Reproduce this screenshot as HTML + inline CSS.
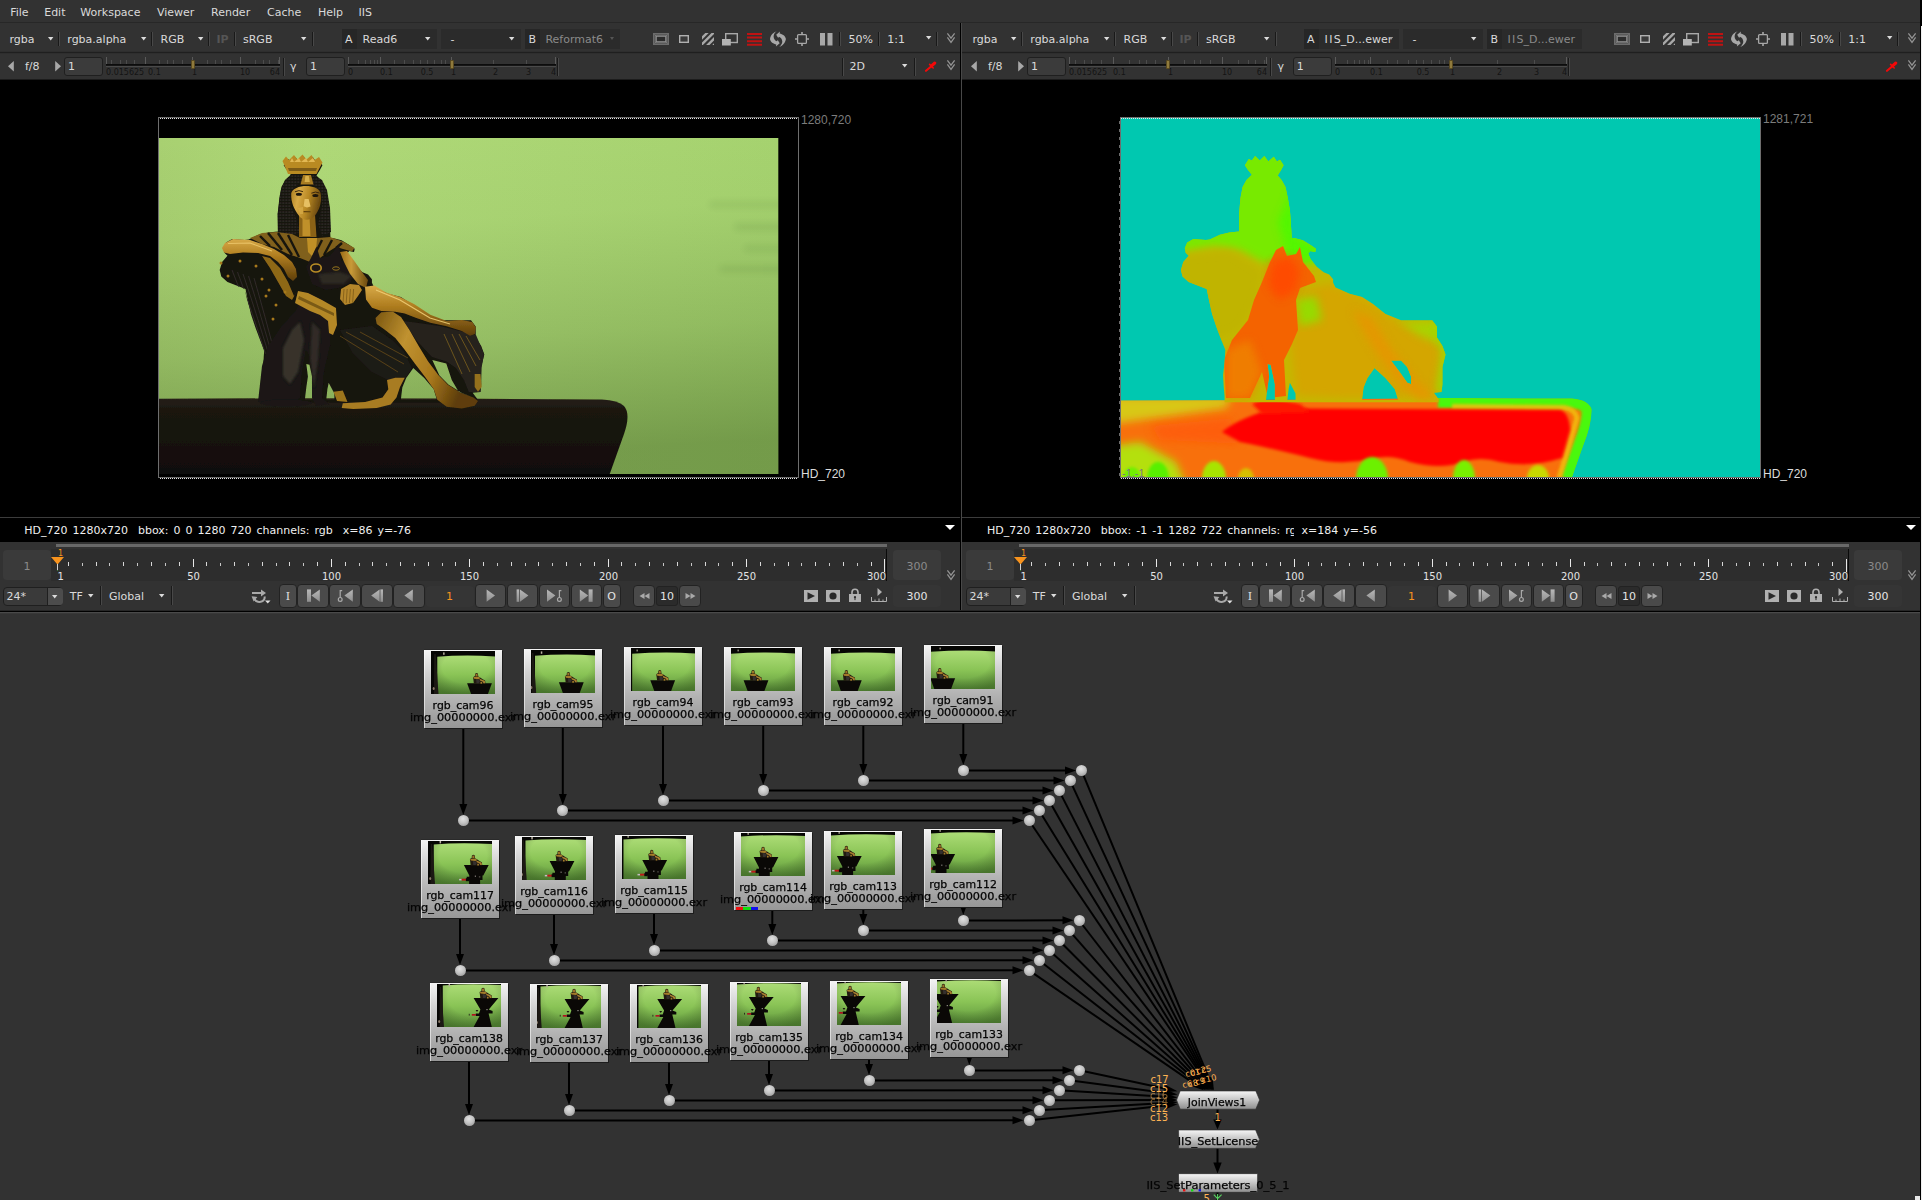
<!DOCTYPE html>
<html lang="en"><head><meta charset="utf-8"><title>Nuke - JoinViews multi-camera depth</title>
<style>
html,body{margin:0;padding:0}
body{width:1922px;height:1200px;overflow:hidden;position:relative;background:#323232;
 font-family:"DejaVu Sans","Liberation Sans",sans-serif;font-size:11px;color:#dadada}
#app{position:absolute;left:0;top:0;width:1922px;height:1200px;overflow:hidden}
#app div,#app span,#app svg{position:absolute;display:block}
#app span{line-height:16px;height:16px;white-space:nowrap}
#app svg{overflow:visible}
#app i{font-style:normal;letter-spacing:1.3px}
#app .nd{background:linear-gradient(#f4f4f4 0%,#d2d2d2 30%,#b4b4b4 62%,#979797 100%);box-shadow:1px 1px 0 #1c1c1c,0 -1px 0 #2a2a2a,inset 1px 0 0 rgba(255,255,255,.55)}
#app .nd svg{left:7px;top:1px;overflow:hidden}
#app .nl{left:-40px;width:158px;text-align:center;color:#050505;font-size:10px;transform:scaleX(1.09);transform-origin:50% 50%;-webkit-text-stroke:0.25px #050505}
#app .n2{transform:scaleX(1.13)}
#app .dot{width:11px;height:11px;border-radius:6px;background:radial-gradient(circle at 45% 35%,#e2e2e2 0%,#c4c4c4 45%,#8a8a8a 100%)}
</style></head><body><div id="app">
<svg width="0" height="0"><defs><linearGradient id="bg" x1="0" y1="0" x2="0" y2="1"><stop offset="0" stop-color="#b8b8b8"/><stop offset="1" stop-color="#8e8e8e"/></linearGradient></defs></svg>

<span style="left:10.2px;top:5px;font-size:11px;color:#dadada;">File</span>
<span style="left:44.2px;top:5px;font-size:11px;color:#dadada;">Edit</span>
<span style="left:80.3px;top:5px;font-size:11px;color:#dadada;">Workspace</span>
<span style="left:157px;top:5px;font-size:11px;color:#dadada;">Viewer</span>
<span style="left:211px;top:5px;font-size:11px;color:#dadada;">Render</span>
<span style="left:267px;top:5px;font-size:11px;color:#dadada;">Cache</span>
<span style="left:318px;top:5px;font-size:11px;color:#dadada;">Help</span>
<span style="left:358.5px;top:5px;font-size:11px;color:#dadada;">IIS</span>
<div style="left:0px;top:22px;width:1920px;height:1px;background:#272727;"></div>
<div style="left:0px;top:51px;width:960px;height:1px;background:#2e2e2e;"></div>
<div style="left:0px;top:52px;width:960px;height:1px;background:#1f1f1f;"></div>
<div style="left:0px;top:53px;width:960px;height:1px;background:#2e2e2e;"></div>
<div style="left:0px;top:79px;width:960px;height:1px;background:#1c1c1c;"></div>
<div style="left:0px;top:80px;width:960px;height:462px;background:#000;"></div>
<div style="left:0px;top:517px;width:960px;height:1px;background:#3c3c3c;"></div>
<div style="left:962px;top:51px;width:958px;height:1px;background:#2e2e2e;"></div>
<div style="left:962px;top:52px;width:958px;height:1px;background:#1f1f1f;"></div>
<div style="left:962px;top:53px;width:958px;height:1px;background:#2e2e2e;"></div>
<div style="left:962px;top:79px;width:958px;height:1px;background:#1c1c1c;"></div>
<div style="left:962px;top:80px;width:958px;height:462px;background:#000;"></div>
<div style="left:962px;top:517px;width:958px;height:1px;background:#3c3c3c;"></div>
<span style="left:9.4px;top:32px;font-size:11px;color:#dadada;">rgba</span>
<svg style="left:47.5px;top:36.5px" width="5.4" height="3.6" viewBox="0 0 5.4 3.6"><path d="M0 0H5.4L2.7 3.6Z" fill="#dcdcdc"/></svg>
<div style="left:58px;top:32px;width:1px;height:14px;background:#191919;"></div>
<div style="left:59px;top:32px;width:1px;height:14px;background:#484848;"></div>
<span style="left:67.3px;top:32px;font-size:11px;color:#dadada;">rgba.alpha</span>
<svg style="left:140.5px;top:36.5px" width="5.4" height="3.6" viewBox="0 0 5.4 3.6"><path d="M0 0H5.4L2.7 3.6Z" fill="#dcdcdc"/></svg>
<div style="left:151px;top:32px;width:1px;height:14px;background:#191919;"></div>
<div style="left:152px;top:32px;width:1px;height:14px;background:#484848;"></div>
<span style="left:160.5px;top:32px;font-size:11px;color:#dadada;">RGB</span>
<svg style="left:197.5px;top:36.5px" width="5.4" height="3.6" viewBox="0 0 5.4 3.6"><path d="M0 0H5.4L2.7 3.6Z" fill="#dcdcdc"/></svg>
<div style="left:208px;top:32px;width:1px;height:14px;background:#191919;"></div>
<div style="left:209px;top:32px;width:1px;height:14px;background:#484848;"></div>
<span style="left:216.5px;top:32px;font-size:11px;color:#555;font-weight:bold">IP</span>
<div style="left:234px;top:32px;width:1px;height:14px;background:#191919;"></div>
<div style="left:235px;top:32px;width:1px;height:14px;background:#484848;"></div>
<span style="left:243px;top:32px;font-size:11px;color:#dadada;">sRGB</span>
<svg style="left:301px;top:36.5px" width="5.4" height="3.6" viewBox="0 0 5.4 3.6"><path d="M0 0H5.4L2.7 3.6Z" fill="#dcdcdc"/></svg>
<div style="left:312px;top:32px;width:1px;height:14px;background:#191919;"></div>
<div style="left:313px;top:32px;width:1px;height:14px;background:#484848;"></div>
<div style="left:342px;top:29px;width:15px;height:20px;background:#262626;"></div>
<div style="left:357px;top:29px;width:80px;height:20px;background:#2b2b2b;"></div>
<span style="left:345px;top:32px;font-size:11px;color:#dadada;">A</span>
<span style="left:362.6px;top:32px;font-size:11px;color:#dadada;">Read6</span>
<svg style="left:424.5px;top:36.5px" width="5.4" height="3.6" viewBox="0 0 5.4 3.6"><path d="M0 0H5.4L2.7 3.6Z" fill="#dcdcdc"/></svg>
<div style="left:441px;top:29px;width:80px;height:20px;background:#2b2b2b;"></div>
<span style="left:450.5px;top:32px;font-size:11px;color:#dadada;">-</span>
<svg style="left:508.5px;top:36.5px" width="5.4" height="3.6" viewBox="0 0 5.4 3.6"><path d="M0 0H5.4L2.7 3.6Z" fill="#dcdcdc"/></svg>
<div style="left:525px;top:29px;width:15px;height:20px;background:#262626;"></div>
<div style="left:540px;top:29px;width:80px;height:20px;background:#2b2b2b;"></div>
<span style="left:528.6px;top:32px;font-size:11px;color:#dadada;">B</span>
<span style="left:545.4px;top:32px;font-size:11px;color:#8a8a8a;">Reformat6</span>
<svg style="left:610px;top:37px" width="4" height="3" viewBox="0 0 4 3"><path d="M0 0H4L2.0 3Z" fill="#555"/></svg>
<svg style="left:653px;top:33px" width="16" height="12" viewBox="0 0 16 12"><rect x="0.5" y="0.5" width="15" height="11" fill="#5a5a5a" stroke="#6c6c6c"/><rect x="3.2" y="3.2" width="9.6" height="5.6" fill="#2c2c2c" stroke="#8e8e8e" stroke-width="1.2"/><path d="M1.5 1.5L3 3M14.5 1.5L13 3M1.5 10.5L3 9M14.5 10.5L13 9" stroke="#8a8a8a" stroke-width="0.6"/></svg>
<svg style="left:679px;top:35px" width="10" height="8" viewBox="0 0 10 8"><rect x="0.7" y="0.7" width="8.6" height="6.6" fill="#3a3a3a" stroke="#b0b0b0" stroke-width="1.4"/></svg>
<svg style="left:702px;top:33px" width="12" height="12" viewBox="0 0 12 12"><clipPath id="st0"><rect width="12" height="12"/></clipPath><g clip-path="url(#st0)" stroke="#a8a8a8" stroke-width="2.4"><path d="M-1 6L6 -1M-1 12.2L12.2 -1M4.8 13L13 4.8M11 13L13 11"/></g></svg>
<svg style="left:722px;top:33px" width="16" height="12.5" viewBox="0 0 16 12.5"><rect x="3.7" y="0.7" width="11.6" height="8.8" fill="none" stroke="#a8a8a8" stroke-width="1.4"/><rect x="0" y="6" width="8.8" height="6.5" fill="#b4b4b4"/></svg>
<svg style="left:747px;top:32.5px" width="15" height="13" viewBox="0 0 15 13"><path d="M0 0H15V2H0ZM0 3.6H15V5.6H0ZM0 7.2H15V9.2H0ZM0 10.8H15V12.8H0Z" fill="#c01212"/></svg>
<svg style="left:770px;top:31px" width="16" height="16" viewBox="0 0 16 16"><path d="M6.6 0.2C4 1 0.6 3.5 0 8C0.3 11 3.5 13 6.3 13.5L5.9 15.4L9.7 12.2L7.7 9L7 10.3C5 9.7 3.7 7.8 3.6 5.4C3.6 3.6 4.8 1.4 6.6 0.2Z" fill="#a8a8a8"/><path d="M6.6 0.2C4 1 0.6 3.5 0 8C0.3 11 3.5 13 6.3 13.5L5.9 15.4L9.7 12.2L7.7 9L7 10.3C5 9.7 3.7 7.8 3.6 5.4C3.6 3.6 4.8 1.4 6.6 0.2Z" fill="#a8a8a8" transform="rotate(180 7.95 8)"/></svg>
<svg style="left:795px;top:32px" width="14" height="14" viewBox="0 0 14 14"><rect x="2.6" y="2.6" width="8.8" height="8.8" rx="1" fill="none" stroke="#a8a8a8" stroke-width="1.3"/><path d="M7 0V3M7 11V14M0 7H3M11 7H14" stroke="#a8a8a8" stroke-width="1.6"/></svg>
<svg style="left:819.5px;top:33px" width="13" height="12.5" viewBox="0 0 13 12.5"><rect x="0" y="0" width="5" height="12.5" fill="#a8a8a8"/><rect x="7.5" y="0" width="5" height="12.5" fill="#a8a8a8"/></svg>
<div style="left:839px;top:32px;width:1px;height:14px;background:#191919;"></div>
<div style="left:840px;top:32px;width:1px;height:14px;background:#484848;"></div>
<span style="left:848.6px;top:32px;font-size:11px;color:#dadada;">50%</span>
<div style="left:878px;top:32px;width:1px;height:14px;background:#191919;"></div>
<div style="left:879px;top:32px;width:1px;height:14px;background:#484848;"></div>
<span style="left:887.3px;top:32px;font-size:11px;color:#dadada;">1:1</span>
<svg style="left:925.6px;top:35.6px" width="5.4" height="3.6" viewBox="0 0 5.4 3.6"><path d="M0 0H5.4L2.7 3.6Z" fill="#dcdcdc"/></svg>
<div style="left:936px;top:32px;width:1px;height:14px;background:#191919;"></div>
<div style="left:937px;top:32px;width:1px;height:14px;background:#484848;"></div>
<svg style="left:947px;top:33px" width="8" height="11" viewBox="0 0 8 11"><path d="M0.4 0.3L4 5.2L7.6 0.3M0.4 4.4L4 9.4L7.6 4.4" fill="none" stroke="#949494" stroke-width="1.25"/></svg>
<svg style="left:7.7px;top:61px" width="6" height="10.4" viewBox="0 0 6 10.4"><path d="M5.8 0V10.4L0 5.2Z" fill="#a8a8a8"/></svg>
<span style="left:25px;top:59px;font-size:11px;color:#dadada;">f/8</span>
<svg style="left:54.6px;top:61px" width="6" height="10.4" viewBox="0 0 6 10.4"><path d="M0.2 0V10.4L6 5.2Z" fill="#a8a8a8"/></svg>
<div style="left:64px;top:57px;width:39px;height:18.5px;background:#3b3b3b;border:1px solid #1f1f1f;box-sizing:border-box;border-radius:3px"></div>
<span style="left:68px;top:59px;font-size:11px;color:#dadada;">1</span>
<div style="left:106px;top:57px;width:1px;height:7px;background:#5a5a5a;"></div>
<div style="left:111px;top:60px;width:1px;height:4px;background:#4c4c4c;"></div>
<div style="left:120px;top:60px;width:1px;height:4px;background:#4c4c4c;"></div>
<div style="left:126px;top:60px;width:1px;height:4px;background:#4c4c4c;"></div>
<div style="left:134px;top:60px;width:1px;height:4px;background:#4c4c4c;"></div>
<div style="left:145px;top:57px;width:1px;height:7px;background:#5a5a5a;"></div>
<div style="left:159px;top:60px;width:1px;height:4px;background:#4c4c4c;"></div>
<div style="left:167px;top:60px;width:1px;height:4px;background:#4c4c4c;"></div>
<div style="left:173px;top:60px;width:1px;height:4px;background:#4c4c4c;"></div>
<div style="left:182px;top:60px;width:1px;height:4px;background:#4c4c4c;"></div>
<div style="left:192px;top:57px;width:1px;height:7px;background:#5a5a5a;"></div>
<div style="left:207px;top:60px;width:1px;height:4px;background:#4c4c4c;"></div>
<div style="left:215px;top:60px;width:1px;height:4px;background:#4c4c4c;"></div>
<div style="left:221px;top:60px;width:1px;height:4px;background:#4c4c4c;"></div>
<div style="left:230px;top:60px;width:1px;height:4px;background:#4c4c4c;"></div>
<div style="left:240px;top:57px;width:1px;height:7px;background:#5a5a5a;"></div>
<div style="left:255px;top:60px;width:1px;height:4px;background:#4c4c4c;"></div>
<div style="left:263px;top:60px;width:1px;height:4px;background:#4c4c4c;"></div>
<div style="left:269px;top:60px;width:1px;height:4px;background:#4c4c4c;"></div>
<div style="left:278px;top:60px;width:1px;height:4px;background:#4c4c4c;"></div>
<div style="left:279px;top:57px;width:1px;height:7px;background:#5a5a5a;"></div>
<div style="left:106px;top:64px;width:174px;height:1px;background:#0c0c0c;"></div>
<div style="left:106px;top:65px;width:174px;height:1px;background:#161616;"></div>
<div style="left:106px;top:66px;width:174px;height:1px;background:#4a4a4a;"></div>
<span style="left:106px;top:65px;font-size:8px;color:#141414;">0.015625</span>
<span style="left:148px;top:65px;font-size:8px;color:#141414;">0.1</span>
<span style="left:192px;top:65px;font-size:8px;color:#141414;">1</span>
<span style="left:240px;top:65px;font-size:8px;color:#141414;">10</span>
<span style="left:219px;top:65px;width:61px;text-align:right;font-size:8px;color:#141414">64</span>
<div style="left:191px;top:60px;width:4px;height:9px;background:#8f7a3c;border:1px solid #5a4a20;box-sizing:border-box;border-radius:1px"></div>
<div style="left:283px;top:58px;width:1px;height:18px;background:#191919;"></div>
<div style="left:284px;top:58px;width:1px;height:18px;background:#484848;"></div>
<span style="left:290px;top:59px;font-size:11px;color:#dadada;">γ</span>
<div style="left:306px;top:57px;width:39px;height:18.5px;background:#3b3b3b;border:1px solid #1f1f1f;box-sizing:border-box;border-radius:3px"></div>
<span style="left:310px;top:59px;font-size:11px;color:#dadada;">1</span>
<div style="left:348px;top:57px;width:1px;height:7px;background:#5a5a5a;"></div>
<div style="left:358px;top:60px;width:1px;height:4px;background:#4c4c4c;"></div>
<div style="left:365px;top:60px;width:1px;height:4px;background:#4c4c4c;"></div>
<div style="left:370px;top:60px;width:1px;height:4px;background:#4c4c4c;"></div>
<div style="left:374px;top:60px;width:1px;height:4px;background:#4c4c4c;"></div>
<div style="left:377px;top:60px;width:1px;height:4px;background:#4c4c4c;"></div>
<div style="left:380px;top:57px;width:1px;height:7px;background:#5a5a5a;"></div>
<div style="left:394px;top:60px;width:1px;height:4px;background:#4c4c4c;"></div>
<div style="left:404px;top:60px;width:1px;height:4px;background:#4c4c4c;"></div>
<div style="left:413px;top:60px;width:1px;height:4px;background:#4c4c4c;"></div>
<div style="left:420px;top:60px;width:1px;height:4px;background:#4c4c4c;"></div>
<div style="left:427px;top:60px;width:1px;height:4px;background:#4c4c4c;"></div>
<div style="left:434px;top:60px;width:1px;height:4px;background:#4c4c4c;"></div>
<div style="left:441px;top:60px;width:1px;height:4px;background:#4c4c4c;"></div>
<div style="left:445px;top:60px;width:1px;height:4px;background:#4c4c4c;"></div>
<div style="left:451px;top:57px;width:1px;height:7px;background:#5a5a5a;"></div>
<div style="left:493px;top:60px;width:1px;height:4px;background:#4c4c4c;"></div>
<div style="left:526px;top:60px;width:1px;height:4px;background:#4c4c4c;"></div>
<div style="left:555px;top:57px;width:1px;height:7px;background:#5a5a5a;"></div>
<div style="left:348px;top:64px;width:208px;height:1px;background:#0c0c0c;"></div>
<div style="left:348px;top:65px;width:208px;height:1px;background:#161616;"></div>
<div style="left:348px;top:66px;width:208px;height:1px;background:#4a4a4a;"></div>
<span style="left:348px;top:65px;font-size:8px;color:#141414;">0</span>
<span style="left:380px;top:65px;font-size:8px;color:#141414;">0.1</span>
<span style="left:397px;top:65px;width:60px;text-align:center;font-size:8px;color:#141414">0.5</span>
<span style="left:451px;top:65px;font-size:8px;color:#141414;">1</span>
<span style="left:493px;top:65px;font-size:8px;color:#141414;">2</span>
<span style="left:526px;top:65px;font-size:8px;color:#141414;">3</span>
<span style="left:495px;top:65px;width:61px;text-align:right;font-size:8px;color:#141414">4</span>
<div style="left:450px;top:60px;width:4px;height:9px;background:#8f7a3c;border:1px solid #5a4a20;box-sizing:border-box;border-radius:1px"></div>
<div style="left:556.5px;top:58px;width:1px;height:18px;background:#191919;"></div>
<div style="left:557.5px;top:58px;width:1px;height:18px;background:#484848;"></div>
<div style="left:842px;top:58px;width:1px;height:18px;background:#191919;"></div>
<div style="left:843px;top:58px;width:1px;height:18px;background:#484848;"></div>
<span style="left:849.5px;top:59px;font-size:11px;color:#dadada;">2D</span>
<svg style="left:901.5px;top:63.5px" width="5.4" height="3.6" viewBox="0 0 5.4 3.6"><path d="M0 0H5.4L2.7 3.6Z" fill="#dcdcdc"/></svg>
<div style="left:914px;top:58px;width:1px;height:18px;background:#191919;"></div>
<div style="left:915px;top:58px;width:1px;height:18px;background:#484848;"></div>
<svg style="left:925.4px;top:60.5px" width="12" height="11" viewBox="0 0 12 11"><path d="M1 9.8L6.4 5.2" stroke="#f40808" stroke-width="2.1" stroke-linecap="round"/><path d="M4.6 3.4L8.2 7" stroke="#f40808" stroke-width="1.6" stroke-linecap="round"/><path d="M6.6 4.8L9.8 2" stroke="#f40808" stroke-width="3" stroke-linecap="round"/></svg>
<svg style="left:947px;top:60px" width="8" height="11" viewBox="0 0 8 11"><path d="M0.4 0.3L4 5.2L7.6 0.3M0.4 4.4L4 9.4L7.6 4.4" fill="none" stroke="#949494" stroke-width="1.25"/></svg>
<span style="left:972.4px;top:32px;font-size:11px;color:#dadada;">rgba</span>
<svg style="left:1010.5px;top:36.5px" width="5.4" height="3.6" viewBox="0 0 5.4 3.6"><path d="M0 0H5.4L2.7 3.6Z" fill="#dcdcdc"/></svg>
<div style="left:1021px;top:32px;width:1px;height:14px;background:#191919;"></div>
<div style="left:1022px;top:32px;width:1px;height:14px;background:#484848;"></div>
<span style="left:1030.3px;top:32px;font-size:11px;color:#dadada;">rgba.alpha</span>
<svg style="left:1103.5px;top:36.5px" width="5.4" height="3.6" viewBox="0 0 5.4 3.6"><path d="M0 0H5.4L2.7 3.6Z" fill="#dcdcdc"/></svg>
<div style="left:1114px;top:32px;width:1px;height:14px;background:#191919;"></div>
<div style="left:1115px;top:32px;width:1px;height:14px;background:#484848;"></div>
<span style="left:1123.5px;top:32px;font-size:11px;color:#dadada;">RGB</span>
<svg style="left:1160.5px;top:36.5px" width="5.4" height="3.6" viewBox="0 0 5.4 3.6"><path d="M0 0H5.4L2.7 3.6Z" fill="#dcdcdc"/></svg>
<div style="left:1171px;top:32px;width:1px;height:14px;background:#191919;"></div>
<div style="left:1172px;top:32px;width:1px;height:14px;background:#484848;"></div>
<span style="left:1179.5px;top:32px;font-size:11px;color:#555;font-weight:bold">IP</span>
<div style="left:1197px;top:32px;width:1px;height:14px;background:#191919;"></div>
<div style="left:1198px;top:32px;width:1px;height:14px;background:#484848;"></div>
<span style="left:1206px;top:32px;font-size:11px;color:#dadada;">sRGB</span>
<svg style="left:1264px;top:36.5px" width="5.4" height="3.6" viewBox="0 0 5.4 3.6"><path d="M0 0H5.4L2.7 3.6Z" fill="#dcdcdc"/></svg>
<div style="left:1275px;top:32px;width:1px;height:14px;background:#191919;"></div>
<div style="left:1276px;top:32px;width:1px;height:14px;background:#484848;"></div>
<div style="left:1304px;top:29px;width:15px;height:20px;background:#262626;"></div>
<div style="left:1319px;top:29px;width:80px;height:20px;background:#2b2b2b;"></div>
<span style="left:1307px;top:32px;font-size:11px;color:#dadada;">A</span>
<span style="left:1324.6px;top:32px;font-size:11px;color:#dadada;"><i>II</i>S_D...ewer</span>
<svg style="left:1389px;top:37px" width="4" height="3" viewBox="0 0 4 3"><path d="M0 0H4L2.0 3Z" fill="#9a9a9a"/></svg>
<div style="left:1403px;top:29px;width:80px;height:20px;background:#2b2b2b;"></div>
<span style="left:1412.5px;top:32px;font-size:11px;color:#dadada;">-</span>
<svg style="left:1470.5px;top:36.5px" width="5.4" height="3.6" viewBox="0 0 5.4 3.6"><path d="M0 0H5.4L2.7 3.6Z" fill="#dcdcdc"/></svg>
<div style="left:1487px;top:29px;width:15px;height:20px;background:#262626;"></div>
<div style="left:1502px;top:29px;width:80px;height:20px;background:#2b2b2b;"></div>
<span style="left:1490.6px;top:32px;font-size:11px;color:#dadada;">B</span>
<span style="left:1507.4px;top:32px;font-size:11px;color:#8a8a8a;"><i>II</i>S_D...ewer</span>
<svg style="left:1614px;top:33px" width="16" height="12" viewBox="0 0 16 12"><rect x="0.5" y="0.5" width="15" height="11" fill="#5a5a5a" stroke="#6c6c6c"/><rect x="3.2" y="3.2" width="9.6" height="5.6" fill="#2c2c2c" stroke="#8e8e8e" stroke-width="1.2"/><path d="M1.5 1.5L3 3M14.5 1.5L13 3M1.5 10.5L3 9M14.5 10.5L13 9" stroke="#8a8a8a" stroke-width="0.6"/></svg>
<svg style="left:1640px;top:35px" width="10" height="8" viewBox="0 0 10 8"><rect x="0.7" y="0.7" width="8.6" height="6.6" fill="#3a3a3a" stroke="#b0b0b0" stroke-width="1.4"/></svg>
<svg style="left:1663px;top:33px" width="12" height="12" viewBox="0 0 12 12"><clipPath id="st961"><rect width="12" height="12"/></clipPath><g clip-path="url(#st961)" stroke="#a8a8a8" stroke-width="2.4"><path d="M-1 6L6 -1M-1 12.2L12.2 -1M4.8 13L13 4.8M11 13L13 11"/></g></svg>
<svg style="left:1683px;top:33px" width="16" height="12.5" viewBox="0 0 16 12.5"><rect x="3.7" y="0.7" width="11.6" height="8.8" fill="none" stroke="#a8a8a8" stroke-width="1.4"/><rect x="0" y="6" width="8.8" height="6.5" fill="#b4b4b4"/></svg>
<svg style="left:1708px;top:32.5px" width="15" height="13" viewBox="0 0 15 13"><path d="M0 0H15V2H0ZM0 3.6H15V5.6H0ZM0 7.2H15V9.2H0ZM0 10.8H15V12.8H0Z" fill="#c01212"/></svg>
<svg style="left:1731px;top:31px" width="16" height="16" viewBox="0 0 16 16"><path d="M6.6 0.2C4 1 0.6 3.5 0 8C0.3 11 3.5 13 6.3 13.5L5.9 15.4L9.7 12.2L7.7 9L7 10.3C5 9.7 3.7 7.8 3.6 5.4C3.6 3.6 4.8 1.4 6.6 0.2Z" fill="#a8a8a8"/><path d="M6.6 0.2C4 1 0.6 3.5 0 8C0.3 11 3.5 13 6.3 13.5L5.9 15.4L9.7 12.2L7.7 9L7 10.3C5 9.7 3.7 7.8 3.6 5.4C3.6 3.6 4.8 1.4 6.6 0.2Z" fill="#a8a8a8" transform="rotate(180 7.95 8)"/></svg>
<svg style="left:1756px;top:32px" width="14" height="14" viewBox="0 0 14 14"><rect x="2.6" y="2.6" width="8.8" height="8.8" rx="1" fill="none" stroke="#a8a8a8" stroke-width="1.3"/><path d="M7 0V3M7 11V14M0 7H3M11 7H14" stroke="#a8a8a8" stroke-width="1.6"/></svg>
<svg style="left:1780.5px;top:33px" width="13" height="12.5" viewBox="0 0 13 12.5"><rect x="0" y="0" width="5" height="12.5" fill="#a8a8a8"/><rect x="7.5" y="0" width="5" height="12.5" fill="#a8a8a8"/></svg>
<div style="left:1800px;top:32px;width:1px;height:14px;background:#191919;"></div>
<div style="left:1801px;top:32px;width:1px;height:14px;background:#484848;"></div>
<span style="left:1809.6px;top:32px;font-size:11px;color:#dadada;">50%</span>
<div style="left:1839px;top:32px;width:1px;height:14px;background:#191919;"></div>
<div style="left:1840px;top:32px;width:1px;height:14px;background:#484848;"></div>
<span style="left:1848.3px;top:32px;font-size:11px;color:#dadada;">1:1</span>
<svg style="left:1886.6px;top:35.6px" width="5.4" height="3.6" viewBox="0 0 5.4 3.6"><path d="M0 0H5.4L2.7 3.6Z" fill="#dcdcdc"/></svg>
<div style="left:1897px;top:32px;width:1px;height:14px;background:#191919;"></div>
<div style="left:1898px;top:32px;width:1px;height:14px;background:#484848;"></div>
<svg style="left:1908px;top:33px" width="8" height="11" viewBox="0 0 8 11"><path d="M0.4 0.3L4 5.2L7.6 0.3M0.4 4.4L4 9.4L7.6 4.4" fill="none" stroke="#949494" stroke-width="1.25"/></svg>
<svg style="left:970.7px;top:61px" width="6" height="10.4" viewBox="0 0 6 10.4"><path d="M5.8 0V10.4L0 5.2Z" fill="#a8a8a8"/></svg>
<span style="left:988px;top:59px;font-size:11px;color:#dadada;">f/8</span>
<svg style="left:1017.6px;top:61px" width="6" height="10.4" viewBox="0 0 6 10.4"><path d="M0.2 0V10.4L6 5.2Z" fill="#a8a8a8"/></svg>
<div style="left:1027px;top:57px;width:39px;height:18.5px;background:#3b3b3b;border:1px solid #1f1f1f;box-sizing:border-box;border-radius:3px"></div>
<span style="left:1031px;top:59px;font-size:11px;color:#dadada;">1</span>
<div style="left:1069px;top:57px;width:1px;height:7px;background:#5a5a5a;"></div>
<div style="left:1075px;top:60px;width:1px;height:4px;background:#4c4c4c;"></div>
<div style="left:1084px;top:60px;width:1px;height:4px;background:#4c4c4c;"></div>
<div style="left:1091px;top:60px;width:1px;height:4px;background:#4c4c4c;"></div>
<div style="left:1101px;top:60px;width:1px;height:4px;background:#4c4c4c;"></div>
<div style="left:1113px;top:57px;width:1px;height:7px;background:#5a5a5a;"></div>
<div style="left:1129px;top:60px;width:1px;height:4px;background:#4c4c4c;"></div>
<div style="left:1139px;top:60px;width:1px;height:4px;background:#4c4c4c;"></div>
<div style="left:1146px;top:60px;width:1px;height:4px;background:#4c4c4c;"></div>
<div style="left:1155px;top:60px;width:1px;height:4px;background:#4c4c4c;"></div>
<div style="left:1168px;top:57px;width:1px;height:7px;background:#5a5a5a;"></div>
<div style="left:1184px;top:60px;width:1px;height:4px;background:#4c4c4c;"></div>
<div style="left:1194px;top:60px;width:1px;height:4px;background:#4c4c4c;"></div>
<div style="left:1200px;top:60px;width:1px;height:4px;background:#4c4c4c;"></div>
<div style="left:1210px;top:60px;width:1px;height:4px;background:#4c4c4c;"></div>
<div style="left:1222px;top:57px;width:1px;height:7px;background:#5a5a5a;"></div>
<div style="left:1238px;top:60px;width:1px;height:4px;background:#4c4c4c;"></div>
<div style="left:1248px;top:60px;width:1px;height:4px;background:#4c4c4c;"></div>
<div style="left:1255px;top:60px;width:1px;height:4px;background:#4c4c4c;"></div>
<div style="left:1264px;top:60px;width:1px;height:4px;background:#4c4c4c;"></div>
<div style="left:1266px;top:57px;width:1px;height:7px;background:#5a5a5a;"></div>
<div style="left:1069px;top:64px;width:198px;height:1px;background:#0c0c0c;"></div>
<div style="left:1069px;top:65px;width:198px;height:1px;background:#161616;"></div>
<div style="left:1069px;top:66px;width:198px;height:1px;background:#4a4a4a;"></div>
<span style="left:1069px;top:65px;font-size:8px;color:#141414;">0.015625</span>
<span style="left:1113px;top:65px;font-size:8px;color:#141414;">0.1</span>
<span style="left:1168px;top:65px;font-size:8px;color:#141414;">1</span>
<span style="left:1222px;top:65px;font-size:8px;color:#141414;">10</span>
<span style="left:1206px;top:65px;width:61px;text-align:right;font-size:8px;color:#141414">64</span>
<div style="left:1166px;top:60px;width:4px;height:9px;background:#8f7a3c;border:1px solid #5a4a20;box-sizing:border-box;border-radius:1px"></div>
<div style="left:1270px;top:58px;width:1px;height:18px;background:#191919;"></div>
<div style="left:1271px;top:58px;width:1px;height:18px;background:#484848;"></div>
<span style="left:1277.4px;top:59px;font-size:11px;color:#dadada;">γ</span>
<div style="left:1292.7px;top:57px;width:39px;height:18.5px;background:#3b3b3b;border:1px solid #1f1f1f;box-sizing:border-box;border-radius:3px"></div>
<span style="left:1296.7px;top:59px;font-size:11px;color:#dadada;">1</span>
<div style="left:1335px;top:57px;width:1px;height:7px;background:#5a5a5a;"></div>
<div style="left:1347px;top:60px;width:1px;height:4px;background:#4c4c4c;"></div>
<div style="left:1354px;top:60px;width:1px;height:4px;background:#4c4c4c;"></div>
<div style="left:1359px;top:60px;width:1px;height:4px;background:#4c4c4c;"></div>
<div style="left:1364px;top:60px;width:1px;height:4px;background:#4c4c4c;"></div>
<div style="left:1368px;top:60px;width:1px;height:4px;background:#4c4c4c;"></div>
<div style="left:1370px;top:57px;width:1px;height:7px;background:#5a5a5a;"></div>
<div style="left:1387px;top:60px;width:1px;height:4px;background:#4c4c4c;"></div>
<div style="left:1397px;top:60px;width:1px;height:4px;background:#4c4c4c;"></div>
<div style="left:1408px;top:60px;width:1px;height:4px;background:#4c4c4c;"></div>
<div style="left:1416px;top:60px;width:1px;height:4px;background:#4c4c4c;"></div>
<div style="left:1423px;top:60px;width:1px;height:4px;background:#4c4c4c;"></div>
<div style="left:1431px;top:60px;width:1px;height:4px;background:#4c4c4c;"></div>
<div style="left:1439px;top:60px;width:1px;height:4px;background:#4c4c4c;"></div>
<div style="left:1444px;top:60px;width:1px;height:4px;background:#4c4c4c;"></div>
<div style="left:1450px;top:57px;width:1px;height:7px;background:#5a5a5a;"></div>
<div style="left:1497px;top:60px;width:1px;height:4px;background:#4c4c4c;"></div>
<div style="left:1534px;top:60px;width:1px;height:4px;background:#4c4c4c;"></div>
<div style="left:1566px;top:57px;width:1px;height:7px;background:#5a5a5a;"></div>
<div style="left:1335px;top:64px;width:232px;height:1px;background:#0c0c0c;"></div>
<div style="left:1335px;top:65px;width:232px;height:1px;background:#161616;"></div>
<div style="left:1335px;top:66px;width:232px;height:1px;background:#4a4a4a;"></div>
<span style="left:1335px;top:65px;font-size:8px;color:#141414;">0</span>
<span style="left:1370px;top:65px;font-size:8px;color:#141414;">0.1</span>
<span style="left:1393px;top:65px;width:60px;text-align:center;font-size:8px;color:#141414">0.5</span>
<span style="left:1450px;top:65px;font-size:8px;color:#141414;">1</span>
<span style="left:1497px;top:65px;font-size:8px;color:#141414;">2</span>
<span style="left:1534px;top:65px;font-size:8px;color:#141414;">3</span>
<span style="left:1506px;top:65px;width:61px;text-align:right;font-size:8px;color:#141414">4</span>
<div style="left:1449px;top:60px;width:4px;height:9px;background:#8f7a3c;border:1px solid #5a4a20;box-sizing:border-box;border-radius:1px"></div>
<div style="left:1568px;top:58px;width:1px;height:18px;background:#191919;"></div>
<div style="left:1569px;top:58px;width:1px;height:18px;background:#484848;"></div>
<svg style="left:1886.4px;top:60.5px" width="12" height="11" viewBox="0 0 12 11"><path d="M1 9.8L6.4 5.2" stroke="#f40808" stroke-width="2.1" stroke-linecap="round"/><path d="M4.6 3.4L8.2 7" stroke="#f40808" stroke-width="1.6" stroke-linecap="round"/><path d="M6.6 4.8L9.8 2" stroke="#f40808" stroke-width="3" stroke-linecap="round"/></svg>
<svg style="left:1908px;top:60px" width="8" height="11" viewBox="0 0 8 11"><path d="M0.4 0.3L4 5.2L7.6 0.3M0.4 4.4L4 9.4L7.6 4.4" fill="none" stroke="#949494" stroke-width="1.25"/></svg>
<svg style="left:150px;top:100px" width="720" height="400" viewBox="0 0 720 400">
<defs>
<linearGradient id="gA" x1="0" y1="0" x2="1" y2="0"><stop offset="0" stop-color="#a8d071"/><stop offset="0.25" stop-color="#afd978"/><stop offset="0.65" stop-color="#abd674"/><stop offset="1" stop-color="#a7d470"/></linearGradient>
<linearGradient id="gB" x1="0" y1="0" x2="0.12" y2="1"><stop offset="0" stop-color="#1c3a08" stop-opacity="0"/><stop offset="0.3" stop-color="#1c3a08" stop-opacity="0.03"/><stop offset="0.65" stop-color="#1c3a08" stop-opacity="0.16"/><stop offset="1" stop-color="#1c3a08" stop-opacity="0.37"/></linearGradient>
<linearGradient id="gold" x1="0" y1="0" x2="0" y2="1"><stop offset="0" stop-color="#d8aa48"/><stop offset="0.4" stop-color="#b07e20"/><stop offset="1" stop-color="#5e3e0a"/></linearGradient>
<linearGradient id="gold2" x1="0" y1="0" x2="1" y2="0.4"><stop offset="0" stop-color="#7a5610"/><stop offset="0.35" stop-color="#c09230"/><stop offset="0.7" stop-color="#a8781c"/><stop offset="1" stop-color="#5e3e0a"/></linearGradient>
<linearGradient id="gold3" x1="0" y1="0" x2="1" y2="0"><stop offset="0" stop-color="#9a6c18"/><stop offset="0.4" stop-color="#c89a38"/><stop offset="1" stop-color="#6a480e"/></linearGradient>
<linearGradient id="face" x1="0" y1="0" x2="1" y2="0.25"><stop offset="0" stop-color="#a87a1e"/><stop offset="0.3" stop-color="#d8aa46"/><stop offset="0.62" stop-color="#b88824"/><stop offset="1" stop-color="#6e4c10"/></linearGradient>
<linearGradient id="tbl" x1="0" y1="0" x2="0" y2="1"><stop offset="0" stop-color="#262016"/><stop offset="0.18" stop-color="#1a160f"/><stop offset="1" stop-color="#100d08"/></linearGradient>
<pattern id="brick" width="3" height="3" patternUnits="userSpaceOnUse"><rect width="3" height="3" fill="#15120e"/><rect x="0.3" y="0.3" width="2.1" height="1.6" fill="#2c2822"/></pattern>
<filter id="b1" x="-10%" y="-10%" width="120%" height="120%"><feGaussianBlur stdDeviation="0.55"/></filter>
<filter id="b2" x="-20%" y="-20%" width="140%" height="140%"><feGaussianBlur stdDeviation="1.3"/></filter>
<filter id="b3" x="-20%" y="-20%" width="140%" height="140%"><feGaussianBlur stdDeviation="3"/></filter>
<clipPath id="imgL"><rect x="9" y="38" width="619.3" height="336"/></clipPath>
</defs>
<rect x="8.5" y="17.5" width="640" height="360" fill="none" stroke="#6e6e6e" stroke-width="1"/>
<path d="M10 18.5H648M10 378.5H648" stroke="#e6e6e6" stroke-width="1" stroke-dasharray="1 1"/>
<g clip-path="url(#imgL)">
<rect x="9" y="38" width="620" height="336" fill="url(#gA)"/>
<rect x="9" y="38" width="620" height="336" fill="url(#gB)"/>
<g filter="url(#b3)" opacity="0.10" fill="#234a0a"><rect x="560" y="102" width="80" height="5"/><rect x="585" y="124" width="55" height="6"/><rect x="595" y="146" width="45" height="5"/><rect x="570" y="166" width="70" height="6"/></g>
<path filter="url(#b1)" d="M0 298.8L150 298.2L300 298.6L452 299.4Q468 300 474 306Q481 314 474 334L459 376L0 376Z" fill="url(#tbl)"/>
<g filter="url(#b1)">
<path d="M132.9 65.3 136.8 59.0 139.9 60.6 143.1 55.9 147.7 60.6 152.4 55.9 156.3 61.4 161.8 56.7 164.9 61.4 168.0 59.8 171.6 65.3 169.1 70.0 165.7 75.4 169.6 80.1 173.5 87.1 175.8 98.1 177.9 110.6 179.0 126.2 179.7 137.9 182.9 138.3 190.7 140.2 198.5 144.9 203.9 148.8 203.2 151.9 198.5 151.1 196.1 153.5 198.5 158.9 204.7 166.7 211.7 172.2 217.2 174.5 221.1 179.2 221.1 182.8 223.4 187.5 237.5 193.7 250.0 196.9 260.9 203.9 273.4 214.0 289.0 220.3 320.2 220.3 324.9 226.5 324.9 237.4 330.4 246.0 333.5 254.6 330.4 267.1 330.4 284.3 329.6 292.1 321.8 292.8 326.5 299.1 326.5 302.2 112.6 302.2 112.6 296.0 111.8 287.4 111.1 274.9 112.6 262.4 113.4 249.9 109.5 240.6 104.8 228.1 100.1 214.0 97.0 200.0 94.7 189.0 76.7 182.0 70.5 176.6 68.9 169.9 71.3 162.1 76.7 155.8 73.6 152.7 72.8 148.0 75.2 142.5 81.4 139.1 93.9 139.9 97.8 139.4 107.9 134.7 117.3 132.4 127.1 131.6 127.1 113.7 128.5 98.1 130.6 87.1 134.5 80.1 139.9 74.7 136.0 70.0ZM155.5 264.0 158.7 264.7 162.9 284.3 162.9 299.9 154.0 299.9 155.5 287.4 157.1 276.5ZM177.9 282.7 183.6 293.6 183.6 299.9 175.4 299.9 176.6 288.9ZM262.5 267.9 273.4 278.0 282.8 288.9 286.2 299.9 250.0 299.9 251.5 287.4 255.4 278.0ZM281.5 260.0 295.5 263.5 301.0 280.0 308.0 292.0 320.0 296.5 310.7 292.8 297.8 284.7 288.5 275.3Z" fill="#16120e" fill-rule="evenodd" transform="translate(0.8 0)"/>
<path d="M254.0 221.0 290.0 226.0 326.0 235.0 334.0 254.0 331.5 268.0 330.5 292.0 318.8 292.0 314.0 280.0 306.0 268.0 296.5 261.5 282.0 257.0 266.0 240.0Z" fill="#26221d" />
<path d="M302.0 234.0L320.0 272.0" stroke="#8a6a20" stroke-width="0.7"/>
<path d="M309.0 234.0L326.0 266.0" stroke="#8a6a20" stroke-width="0.7"/>
<path d="M294.0 234.0L312.0 274.0" stroke="#8a6a20" stroke-width="0.7"/>
<path d="M316.0 236.0L330.0 260.0" stroke="#8a6a20" stroke-width="0.7"/>
<path d="M190.0 230.0 222.0 226.0 242.0 240.0 254.0 252.0 262.0 268.0 254.0 280.0 238.0 280.0 222.0 272.0 202.0 252.0Z" fill="#1f1b16" />
<path d="M190.0 236.0L248.0 272.0" stroke="#7a5c1a" stroke-width="0.6"/>
<path d="M196.0 232.0L254.0 264.0" stroke="#7a5c1a" stroke-width="0.6"/>
<path d="M210.0 232.0L258.0 258.0" stroke="#7a5c1a" stroke-width="0.6"/>
<clipPath id="silL"><path d="M132.9 65.3 136.8 59.0 139.9 60.6 143.1 55.9 147.7 60.6 152.4 55.9 156.3 61.4 161.8 56.7 164.9 61.4 168.0 59.8 171.6 65.3 169.1 70.0 165.7 75.4 169.6 80.1 173.5 87.1 175.8 98.1 177.9 110.6 179.0 126.2 179.7 137.9 182.9 138.3 190.7 140.2 198.5 144.9 203.9 148.8 203.2 151.9 198.5 151.1 196.1 153.5 198.5 158.9 204.7 166.7 211.7 172.2 217.2 174.5 221.1 179.2 221.1 182.8 223.4 187.5 237.5 193.7 250.0 196.9 260.9 203.9 273.4 214.0 289.0 220.3 320.2 220.3 324.9 226.5 324.9 237.4 330.4 246.0 333.5 254.6 330.4 267.1 330.4 284.3 329.6 292.1 321.8 292.8 326.5 299.1 326.5 302.2 112.6 302.2 112.6 296.0 111.8 287.4 111.1 274.9 112.6 262.4 113.4 249.9 109.5 240.6 104.8 228.1 100.1 214.0 97.0 200.0 94.7 189.0 76.7 182.0 70.5 176.6 68.9 169.9 71.3 162.1 76.7 155.8 73.6 152.7 72.8 148.0 75.2 142.5 81.4 139.1 93.9 139.9 97.8 139.4 107.9 134.7 117.3 132.4 127.1 131.6 127.1 113.7 128.5 98.1 130.6 87.1 134.5 80.1 139.9 74.7 136.0 70.0ZM155.5 264.0 158.7 264.7 162.9 284.3 162.9 299.9 154.0 299.9 155.5 287.4 157.1 276.5ZM177.9 282.7 183.6 293.6 183.6 299.9 175.4 299.9 176.6 288.9ZM262.5 267.9 273.4 278.0 282.8 288.9 286.2 299.9 250.0 299.9 251.5 287.4 255.4 278.0ZM281.5 260.0 295.5 263.5 301.0 280.0 308.0 292.0 320.0 296.5 310.7 292.8 297.8 284.7 288.5 275.3Z" clip-rule="evenodd"/></clipPath><g clip-path="url(#silL)">
<path d="M82.0 170.0Q94.0 200.0 112.0 252.0" stroke="#2e2a26" stroke-width="1.1" fill="none"/>
<path d="M87.5 172.0Q99.0 203.0 115.6 254.0" stroke="#2e2a26" stroke-width="1.1" fill="none"/>
<path d="M93.0 174.0Q104.0 206.0 119.2 256.0" stroke="#2e2a26" stroke-width="1.1" fill="none"/>
<path d="M98.5 176.0Q109.0 209.0 122.8 258.0" stroke="#2e2a26" stroke-width="1.1" fill="none"/>
<path d="M104.0 178.0Q114.0 212.0 126.4 260.0" stroke="#2e2a26" stroke-width="1.1" fill="none"/>
</g>
<path d="M131.0 90.0 135.0 80.0 141.0 75.0 150.0 73.5 163.0 74.0 172.0 80.0 177.0 90.0 180.0 108.0 181.0 132.0 172.0 136.0 168.0 124.0 172.0 106.0 171.0 92.0 162.0 84.0 148.0 84.0 141.0 91.0 141.0 106.0 146.0 118.0 150.0 132.0 140.0 136.0 128.0 133.0 127.5 114.0Z" fill="url(#brick)" />
<path d="M132.5 61.0 136.0 56.5 139.0 60.0 144.0 55.0 147.5 59.5 152.5 54.5 156.5 59.5 161.5 55.0 164.5 60.0 169.0 57.0 172.5 62.5 169.0 69.0 166.5 74.0 138.0 74.0 135.5 68.0Z" fill="#b98a24" />
<path d="M138.0 68.0 167.0 68.0 166.0 71.0 139.0 71.0Z" fill="#7c5a12" />
<path d="M140.0 62.0 142.0 58.0 144.0 62.0 149.0 58.0 151.0 62.0 156.0 58.0 158.0 62.0 163.0 58.0 165.0 62.0Z" fill="#e2b852" />
<path d="M149.0 116.0 165.0 114.0 166.5 137.0 149.0 137.0Z" fill="#8a6216" />
<path d="M152.5 117.0 159.5 117.0 160.5 136.0 152.5 136.0Z" fill="#c0902a" />
<path d="M141.2 93.5C142.8 84.5 166.8 83.0 170.4 92.5C172.2 99.5 170.4 109.5 164.2 116.5C159.8 121.1 152.8 121.1 148.8 115.5C144.2 109.5 140.8 102.5 141.2 93.5Z" fill="url(#face)"/>
<path d="M154.6 99.0 158.6 99.0 160.6 106.4 157.0 107.6 153.6 106.2Z" fill="#e6c064" />
<path d="M148.0 108.0 153.0 107.0 153.0 114.0 150.0 114.0Z" fill="#d8ac48" opacity=".7"/>
<ellipse cx="148.9" cy="94.2" rx="3" ry="1.5" fill="#1c1208"/>
<path d="M144.9 91.8Q148.9 89.6 152.9 91.6" stroke="#3a260c" stroke-width="1" fill="none"/>
<ellipse cx="165.4" cy="95.6" rx="3" ry="1.5" fill="#1c1208"/>
<path d="M161.4 93.2Q165.4 91.0 169.4 93.0" stroke="#3a260c" stroke-width="1" fill="none"/>
<path d="M153.6 111.6L160.6 111.8" stroke="#5e3e0c" stroke-width="1.1"/>
<path d="M153.0 75.0 161.0 75.0 163.5 84.5 150.5 84.5Z" fill="#a87c20" />
<path d="M155.4 76.0 158.8 76.0 159.8 82.0 154.6 82.0Z" fill="#d8b04c" />
<path d="M100.0 138.0 112.0 133.0 126.0 132.0 142.0 134.0 150.0 138.0 168.0 138.0 180.0 137.0 194.0 142.0 204.5 148.0 202.0 151.5 193.0 149.0 186.0 147.0 178.0 152.0 170.0 158.0 160.0 162.0 150.0 158.0 138.0 154.0 124.0 147.0 112.0 144.0Z" fill="#80601a" />
<path d="M110.0 136.0L120.0 146.0" stroke="#17130f" stroke-width="2.4"/>
<path d="M118.0 133.0L132.0 150.0" stroke="#17130f" stroke-width="2.4"/>
<path d="M128.0 133.0L142.0 155.0" stroke="#17130f" stroke-width="2.4"/>
<path d="M138.0 135.0L149.0 157.0" stroke="#17130f" stroke-width="2.4"/>
<path d="M172.0 140.0L162.0 160.0" stroke="#17130f" stroke-width="2.4"/>
<path d="M182.0 140.0L174.0 155.0" stroke="#17130f" stroke-width="2.4"/>
<path d="M192.0 143.0L186.0 148.0" stroke="#17130f" stroke-width="2.4"/>
<path d="M157.0 138.0 167.0 138.0 166.0 152.0 162.0 156.0 158.0 152.0Z" fill="#c09028" />
<path d="M72.0 148.0 75.0 143.0 83.0 139.0 100.0 140.0 112.0 144.0 124.0 149.0 134.0 155.0 142.0 162.0 146.0 169.0 147.0 177.0 143.0 181.0 138.0 177.0 134.0 169.0 128.0 162.0 120.0 156.0 108.0 153.0 93.0 152.5 80.0 154.0 74.0 152.5Z" fill="url(#gold)" />
<path d="M78.0 143.5L100.0 143.0L122.0 151.0" stroke="#f0cc70" stroke-width="1.1" fill="none" opacity=".8"/>
<path d="M112.0 156.0 120.0 158.0 130.0 168.0 138.0 182.0 144.0 196.0 147.0 191.0 142.0 200.0 136.0 196.0 128.0 182.0 120.0 168.0Z" fill="#8e6818" />
<circle cx="71.0" cy="163.0" r="1.5" fill="#a67a1c"/>
<circle cx="78.0" cy="176.0" r="1.5" fill="#a67a1c"/>
<circle cx="90.0" cy="161.0" r="1.5" fill="#a67a1c"/>
<circle cx="106.0" cy="166.0" r="1.5" fill="#a67a1c"/>
<circle cx="112.0" cy="179.0" r="1.5" fill="#a67a1c"/>
<circle cx="119.0" cy="190.0" r="1.5" fill="#a67a1c"/>
<circle cx="116.0" cy="196.0" r="1.5" fill="#a67a1c"/>
<circle cx="126.0" cy="205.0" r="1.5" fill="#a67a1c"/>
<circle cx="123.0" cy="219.0" r="1.5" fill="#a67a1c"/>
<circle cx="135.0" cy="192.0" r="1.5" fill="#a67a1c"/>
<path d="M156.0 167.0 161.0 158.0 166.5 146.5 170.0 158.0 180.0 156.0 189.0 144.5 191.0 160.0 200.0 168.0 205.5 175.0 199.0 184.0 188.0 188.0 176.0 190.0 162.0 184.0Z" fill="#1b1815" />
<path d="M108.0 302.0 112.0 266.0 118.0 246.0 130.0 228.0 146.0 210.0 150.0 200.0 182.0 218.0 180.0 246.0 174.0 272.0 172.0 298.0 180.0 304.0 166.0 306.0 162.0 298.0 162.0 260.0 156.0 250.0 152.0 272.0 150.0 298.0 142.0 304.0Z" fill="#1a1714" />
<ellipse cx="136.0" cy="303.0" rx="26" ry="3.4" fill="#1a1714"/>
<path d="M190.0 152.0 197.0 151.0 205.0 162.0 212.0 172.0 218.0 180.0 216.0 188.0 208.0 184.0 200.0 174.0 194.0 162.0Z" fill="url(#gold3)" />
<path d="M191.0 189.0 200.0 184.0 209.0 185.0 212.0 190.0 208.0 196.0 203.0 203.0 195.0 205.0 190.0 199.0Z" fill="#b4862a" />
<path d="M194.0 189.0L193.0 203.0" stroke="#6a4a10" stroke-width="0.6"/>
<path d="M197.2 189.0L196.2 203.0" stroke="#6a4a10" stroke-width="0.6"/>
<path d="M200.4 189.0L199.4 203.0" stroke="#6a4a10" stroke-width="0.6"/>
<path d="M203.6 189.0L202.6 203.0" stroke="#6a4a10" stroke-width="0.6"/>
<ellipse cx="166.0" cy="168.0" rx="5.2" ry="4" fill="none" stroke="#b98c26" stroke-width="1.7"/>
<ellipse cx="186.0" cy="168.5" rx="3.4" ry="1.7" fill="none" stroke="#a47c20" stroke-width="0.9"/>
<path d="M148.0 191.0 158.0 193.0 172.0 200.0 186.0 208.0 187.0 225.0 183.0 235.0 179.0 233.0 178.0 221.0 170.0 215.0 160.0 211.0 145.0 203.0Z" fill="#b48828" />
<path d="M149.0 196.0 184.0 213.0 184.0 216.0 148.0 199.0Z" fill="#7a5a14" />
<path d="M215.0 186.7 224.3 185.5 236.0 192.5 250.0 197.0 264.0 204.0 280.3 214.7 296.7 221.0 311.8 220.0 322.3 222.0 325.8 227.5 325.0 234.0 320.0 235.7 311.8 231.0 296.7 226.3 280.3 222.8 266.3 218.0 254.7 213.5 245.3 211.7 231.3 211.0 222.0 207.7 216.0 199.5Z" fill="url(#gold)" />
<path d="M226.0 190.0L250.0 200.0L280.0 218.0L300.0 224.0" stroke="#f2d078" stroke-width="1.2" fill="none" opacity=".85"/>
<path d="M225.5 218.0 231.3 212.3 243.0 211.7 251.0 217.0 259.3 229.8 268.7 246.0 278.0 261.3 288.5 275.3 297.8 284.7 310.7 292.8 323.5 297.5 328.0 301.0 324.7 305.7 311.8 308.6 296.7 306.8 287.3 299.8 283.8 289.3 275.7 277.7 265.0 263.7 254.7 249.7 245.3 238.0 234.8 229.8 226.7 224.0Z" fill="url(#gold2)" />
<path d="M237.0 280.0 245.3 277.7 254.7 277.7 250.0 287.0 246.5 297.5 240.7 304.5 226.7 308.0 203.3 309.0 191.7 308.0 192.8 303.3 215.0 302.0 232.5 297.5 238.3 289.3Z" fill="#a87c20" />
<path d="M183.5 291.7 192.8 290.5 197.5 302.0 187.0 301.0Z" fill="#9c741c" />
<path d="M324.7 274.0 330.5 274.0 331.7 287.0 328.0 291.7 324.7 287.0Z" fill="#94701a" />
<path filter="url(#b2)" d="M133.0 248.0 142.0 230.0 150.0 222.0 154.0 240.0 148.0 272.0 140.0 284.0 133.0 276.0Z" fill="#4c463e" opacity="0.6"/>
<path filter="url(#b2)" d="M162.0 222.0 170.0 230.0 168.0 260.0 164.0 288.0 160.0 260.0Z" fill="#46403a" opacity="0.5"/>
<path filter="url(#b2)" d="M168.0 174.0 190.0 172.0 202.0 176.0 194.0 184.0 172.0 184.0Z" fill="#3a342e" opacity="0.6"/>
</g>
</g>
<text x="651" y="24" font-family="Liberation Sans, sans-serif" font-size="12" fill="#7c7c7c">1280,720</text>
<text x="651" y="378" font-family="Liberation Sans, sans-serif" font-size="12" fill="#dcdcdc">HD_720</text>
</svg>
<svg style="left:1110px;top:100px" width="720" height="400" viewBox="0 0 720 400">
<defs>
<filter id="r1" x="-10%" y="-10%" width="120%" height="120%"><feGaussianBlur stdDeviation="0.6"/></filter>
<filter id="r2" x="-20%" y="-20%" width="140%" height="140%"><feGaussianBlur stdDeviation="1.8"/></filter>
<filter id="r4" x="-20%" y="-20%" width="140%" height="140%"><feGaussianBlur stdDeviation="4"/></filter>
<filter id="r8" x="-20%" y="-20%" width="140%" height="140%"><feGaussianBlur stdDeviation="7"/></filter>
<clipPath id="imgR"><rect x="10" y="18" width="640" height="360"/></clipPath>
<clipPath id="silR"><path d="M134.9 65.3 138.8 59.0 141.9 60.6 145.1 55.9 149.7 60.6 154.4 55.9 158.3 61.4 163.8 56.7 166.9 61.4 170.0 59.8 173.6 65.3 171.1 70.0 167.7 75.4 171.6 80.1 175.5 87.1 177.8 98.1 179.9 110.6 181.0 126.2 181.7 137.9 184.9 138.3 192.7 140.2 200.5 144.9 205.9 148.8 205.2 151.9 200.5 151.1 198.1 153.5 200.5 158.9 206.7 166.7 213.7 172.2 219.2 174.5 223.1 179.2 223.1 182.8 225.4 187.5 239.5 193.7 252.0 196.9 262.9 203.9 275.4 214.0 291.0 220.3 322.2 220.3 326.9 226.5 326.9 237.4 332.4 246.0 335.5 254.6 332.4 267.1 332.4 284.3 331.6 292.1 323.8 292.8 328.5 299.1 328.5 302.2 114.6 302.2 114.6 296.0 113.8 287.4 113.1 274.9 114.6 262.4 115.4 249.9 111.5 240.6 106.8 228.1 102.1 214.0 99.0 200.0 96.7 189.0 78.7 182.0 72.5 176.6 70.9 169.9 73.3 162.1 78.7 155.8 75.6 152.7 74.8 148.0 77.2 142.5 83.4 139.1 95.9 139.9 99.8 139.4 109.9 134.7 119.3 132.4 129.1 131.6 129.1 113.7 130.5 98.1 132.6 87.1 136.5 80.1 141.9 74.7 138.0 70.0ZM157.5 264.0 160.7 264.7 164.9 284.3 164.9 299.9 156.0 299.9 157.5 287.4 159.1 276.5ZM179.9 282.7 185.6 293.6 185.6 299.9 177.4 299.9 178.6 288.9ZM264.5 267.9 275.4 278.0 284.8 288.9 288.2 299.9 252.0 299.9 253.5 287.4 257.4 278.0ZM280.9 260.5 291.0 260.5 297.2 267.1 301.1 276.5 301.1 284.3 297.2 282.7 289.4 271.8Z" clip-rule="evenodd"/></clipPath>
</defs>
<g clip-path="url(#imgR)">
<rect x="10" y="18" width="640" height="360" fill="#00c8b0"/>
<clipPath id="tblR"><path d="M10.0 300.6L115.0 300.2L220.0 299.0L330.0 298.0L462.0 298.6Q478.0 300.0 481.5 309.0Q482.0 324.0 473.0 346.0L461.0 380.0L10.0 380.0Z"/></clipPath>
<g clip-path="url(#tblR)">
<path d="M10.0 300.6L115.0 300.2L220.0 299.0L330.0 298.0L462.0 298.6Q478.0 300.0 481.5 309.0Q482.0 324.0 473.0 346.0L461.0 380.0L10.0 380.0Z" fill="#f8700c"/>
<path filter="url(#r4)" d="M2.0 296.0L122.0 296.0L116.0 308.0L60.0 316.0L2.0 324.0Z" fill="#d8c818"/>
<path filter="url(#r4)" d="M2.0 346.0L30.0 342.0L66.0 362.0L76.0 386.0L2.0 386.0Z" fill="#b4e010"/>
<path filter="url(#r4)" d="M40.0 326.0L120.0 318.0L130.0 344.0L50.0 340.0Z" fill="#ff5a08" opacity=".8"/>
<path filter="url(#r2)" d="M328.0 298.5L462.0 299.0Q478.0 300.0 481.0 309.0Q481.5 324.0 472.0 346.0L460.0 380.0" fill="none" stroke="#48f808" stroke-width="19"/>
<path filter="url(#r2)" d="M342.0 306.5L454.0 307.5Q465.0 309.0 467.0 318.0L459.0 346.0L449.0 378.0" fill="none" stroke="#f0c010" stroke-width="5" opacity=".9"/>
<path filter="url(#r2)" d="M112.0 332.0Q126.0 320.0 158.0 310.0L190.0 308.5L450.0 310.0Q459.0 312.0 460.0 330.0L452.0 358.0Q420.0 368.0 390.0 362.0Q370.0 356.0 354.0 362.0Q330.0 370.0 300.0 362.0Q280.0 354.0 262.0 359.0Q230.0 366.0 200.0 358.0Q160.0 348.0 130.0 342.0Z" fill="#ff0000"/>
<path filter="url(#r2)" d="M142.0 304.0Q152.0 298.0 166.0 299.0L190.0 304.0L200.0 312.0L152.0 314.0Z" fill="#ff1800"/>
<ellipse filter="url(#r2)" cx="48" cy="379" rx="11" ry="17" fill="#58f000"/>
<ellipse filter="url(#r2)" cx="22" cy="379" rx="9" ry="12" fill="#70f000"/>
<ellipse filter="url(#r2)" cx="104" cy="379" rx="12" ry="18" fill="#a8e400"/>
<ellipse filter="url(#r2)" cx="136" cy="379" rx="8" ry="11" fill="#d8c000"/>
<ellipse filter="url(#r2)" cx="262" cy="379" rx="16" ry="22" fill="#6cf000"/>
<ellipse filter="url(#r2)" cx="354" cy="379" rx="11" ry="19" fill="#78f000"/>
<ellipse filter="url(#r2)" cx="428" cy="379" rx="11" ry="14" fill="#c8d800"/>
</g>
<g filter="url(#r1)">
<path d="M134.9 65.3 138.8 59.0 141.9 60.6 145.1 55.9 149.7 60.6 154.4 55.9 158.3 61.4 163.8 56.7 166.9 61.4 170.0 59.8 173.6 65.3 171.1 70.0 167.7 75.4 171.6 80.1 175.5 87.1 177.8 98.1 179.9 110.6 181.0 126.2 181.7 137.9 184.9 138.3 192.7 140.2 200.5 144.9 205.9 148.8 205.2 151.9 200.5 151.1 198.1 153.5 200.5 158.9 206.7 166.7 213.7 172.2 219.2 174.5 223.1 179.2 223.1 182.8 225.4 187.5 239.5 193.7 252.0 196.9 262.9 203.9 275.4 214.0 291.0 220.3 322.2 220.3 326.9 226.5 326.9 237.4 332.4 246.0 335.5 254.6 332.4 267.1 332.4 284.3 331.6 292.1 323.8 292.8 328.5 299.1 328.5 302.2 114.6 302.2 114.6 296.0 113.8 287.4 113.1 274.9 114.6 262.4 115.4 249.9 111.5 240.6 106.8 228.1 102.1 214.0 99.0 200.0 96.7 189.0 78.7 182.0 72.5 176.6 70.9 169.9 73.3 162.1 78.7 155.8 75.6 152.7 74.8 148.0 77.2 142.5 83.4 139.1 95.9 139.9 99.8 139.4 109.9 134.7 119.3 132.4 129.1 131.6 129.1 113.7 130.5 98.1 132.6 87.1 136.5 80.1 141.9 74.7 138.0 70.0ZM157.5 264.0 160.7 264.7 164.9 284.3 164.9 299.9 156.0 299.9 157.5 287.4 159.1 276.5ZM179.9 282.7 185.6 293.6 185.6 299.9 177.4 299.9 178.6 288.9ZM264.5 267.9 275.4 278.0 284.8 288.9 288.2 299.9 252.0 299.9 253.5 287.4 257.4 278.0ZM280.9 260.5 291.0 260.5 297.2 267.1 301.1 276.5 301.1 284.3 297.2 282.7 289.4 271.8Z" fill="#c4b800" fill-rule="evenodd"/>
</g>
<g clip-path="url(#silR)">
<path filter="url(#r4)" d="M120.0 40.0 190.0 40.0 190.0 136.0 212.0 146.0 212.0 162.0 186.0 162.0 152.0 162.0 130.0 150.0 104.0 146.0 70.0 152.0 70.0 136.0 120.0 128.0Z" fill="#78ea00" opacity="1"/>
<path filter="url(#r4)" d="M168.0 122.0 186.0 80.0 186.0 136.0 208.0 148.0 208.0 162.0 180.0 162.0Z" fill="#50f800" opacity="0.9"/>
<path filter="url(#r4)" d="M66.0 156.0 120.0 150.0 152.0 170.0 148.0 200.0 130.0 230.0 106.0 240.0 90.0 200.0 70.0 180.0Z" fill="#c0b400" opacity="1"/>
<path filter="url(#r4)" d="M190.0 190.0 220.0 184.0 260.0 200.0 290.0 224.0 330.0 230.0 336.0 260.0 330.0 292.0 290.0 298.0 230.0 298.0 186.0 296.0 180.0 240.0Z" fill="#d4a600" opacity="1"/>
<path filter="url(#r4)" d="M242.0 210.0 262.0 218.0 282.0 250.0 310.0 284.0 330.0 298.0 310.0 302.0 286.0 280.0 262.0 246.0Z" fill="#e89400" opacity="0.8"/>
<path filter="url(#r4)" d="M186.0 200.0 206.0 196.0 212.0 220.0 190.0 226.0Z" fill="#90e000" opacity="0.9"/>
<path filter="url(#r4)" d="M290.0 222.0 326.0 222.0 334.0 246.0 310.0 236.0Z" fill="#a0dc00" opacity="0.8"/>
<path filter="url(#r4)" d="M322.0 222.0 340.0 222.0 342.0 252.0 336.0 292.0 326.0 292.0 332.0 252.0Z" fill="#96e000" opacity="0.85"/>
<path filter="url(#r1)" d="M173.0 146.0 177.0 156.0 186.0 154.0 190.0 147.0 193.0 162.0 204.0 176.0 206.0 182.0 190.0 188.0 186.0 200.0 188.0 230.0 182.0 244.0 174.0 260.0 176.0 296.0 158.0 298.0 152.0 272.0 140.0 298.0 116.0 298.0 114.0 260.0 122.0 240.0 138.0 220.0 144.0 200.0 152.0 182.0 160.0 162.0 166.0 150.0Z" fill="#f46400" opacity="1"/>
<path filter="url(#r4)" d="M162.0 162.0 180.0 156.0 190.0 170.0 186.0 190.0 170.0 200.0 158.0 186.0Z" fill="#ff4800" opacity="0.9"/>
<path filter="url(#r4)" d="M116.0 250.0 140.0 240.0 152.0 272.0 140.0 298.0 116.0 298.0Z" fill="#ee8400" opacity="0.8"/>
</g>
</g>
<rect x="10.5" y="17.5" width="640" height="360" fill="none" stroke="#6e6e6e" stroke-width="1"/>
<path d="M11 18.5H651M11 378.5H651" stroke="#e6e6e6" stroke-width="1" stroke-dasharray="1 1"/>
<path d="M9.5 21V378" stroke="#6e6e6e" stroke-width="1" stroke-dasharray="3 5"/>
<text x="653" y="23" font-family="Liberation Sans, sans-serif" font-size="12" fill="#7c7c7c">1281,721</text>
<text x="653" y="378" font-family="Liberation Sans, sans-serif" font-size="12" fill="#dcdcdc">HD_720</text>
<text x="12" y="377" font-family="Liberation Sans, sans-serif" font-size="11" fill="#7c7c7c">-1,-1</text>
</svg>
<span style="left:24.2px;top:523px;font-size:11px;color:#f0f0f0;word-spacing:1.5px">HD_720 1280x720&nbsp; bbox: 0 0 1280 720 channels: rgb&nbsp; x=86 y=-76</span>
<svg style="left:945px;top:525px" width="10" height="5" viewBox="0 0 10 5"><path d="M0 0H10L5 5Z" fill="#fff"/></svg>
<span style="left:987px;top:523px;width:307px;overflow:hidden;font-size:11px;color:#f0f0f0;word-spacing:1.5px">HD_720 1280x720&nbsp; bbox: -1 -1 1282 722 channels: rgba</span>
<span style="left:1301.5px;top:523px;font-size:11px;color:#f0f0f0;word-spacing:1.5px">x=184 y=-56</span>
<svg style="left:1906px;top:525px" width="10" height="5" viewBox="0 0 10 5"><path d="M0 0H10L5 5Z" fill="#fff"/></svg>
<div style="left:51px;top:549px;width:836.0px;height:32px;background:#2d2d2d;"></div>
<div style="left:56px;top:544px;width:831px;height:3px;background:#686868;"></div>
<div style="left:3px;top:550px;width:48px;height:30px;background:#3a3a3a;border-radius:4px"></div>
<span style="left:-73px;top:559px;width:200px;text-align:center;font-size:11px;color:#8a8a8a;">1</span>
<div style="left:68px;top:562px;width:1px;height:4px;background:#d8d8d8;"></div>
<div style="left:82px;top:563px;width:1px;height:3px;background:#c8c8c8;"></div>
<div style="left:96px;top:562px;width:1px;height:4px;background:#d8d8d8;"></div>
<div style="left:109px;top:563px;width:1px;height:3px;background:#c8c8c8;"></div>
<div style="left:123px;top:562px;width:1px;height:4px;background:#d8d8d8;"></div>
<div style="left:137px;top:563px;width:1px;height:3px;background:#c8c8c8;"></div>
<div style="left:151px;top:562px;width:1px;height:4px;background:#d8d8d8;"></div>
<div style="left:165px;top:563px;width:1px;height:3px;background:#c8c8c8;"></div>
<div style="left:179px;top:562px;width:1px;height:4px;background:#d8d8d8;"></div>
<div style="left:193px;top:559px;width:1px;height:8px;background:#e8e8e8;"></div>
<div style="left:206px;top:562px;width:1px;height:4px;background:#d8d8d8;"></div>
<div style="left:220px;top:563px;width:1px;height:3px;background:#c8c8c8;"></div>
<div style="left:234px;top:562px;width:1px;height:4px;background:#d8d8d8;"></div>
<div style="left:248px;top:563px;width:1px;height:3px;background:#c8c8c8;"></div>
<div style="left:262px;top:562px;width:1px;height:4px;background:#d8d8d8;"></div>
<div style="left:276px;top:563px;width:1px;height:3px;background:#c8c8c8;"></div>
<div style="left:289px;top:562px;width:1px;height:4px;background:#d8d8d8;"></div>
<div style="left:303px;top:563px;width:1px;height:3px;background:#c8c8c8;"></div>
<div style="left:317px;top:562px;width:1px;height:4px;background:#d8d8d8;"></div>
<div style="left:331px;top:559px;width:1px;height:8px;background:#e8e8e8;"></div>
<div style="left:345px;top:562px;width:1px;height:4px;background:#d8d8d8;"></div>
<div style="left:359px;top:563px;width:1px;height:3px;background:#c8c8c8;"></div>
<div style="left:372px;top:562px;width:1px;height:4px;background:#d8d8d8;"></div>
<div style="left:386px;top:563px;width:1px;height:3px;background:#c8c8c8;"></div>
<div style="left:400px;top:562px;width:1px;height:4px;background:#d8d8d8;"></div>
<div style="left:414px;top:563px;width:1px;height:3px;background:#c8c8c8;"></div>
<div style="left:428px;top:562px;width:1px;height:4px;background:#d8d8d8;"></div>
<div style="left:442px;top:563px;width:1px;height:3px;background:#c8c8c8;"></div>
<div style="left:455px;top:562px;width:1px;height:4px;background:#d8d8d8;"></div>
<div style="left:469px;top:559px;width:1px;height:8px;background:#e8e8e8;"></div>
<div style="left:483px;top:562px;width:1px;height:4px;background:#d8d8d8;"></div>
<div style="left:497px;top:563px;width:1px;height:3px;background:#c8c8c8;"></div>
<div style="left:511px;top:562px;width:1px;height:4px;background:#d8d8d8;"></div>
<div style="left:525px;top:563px;width:1px;height:3px;background:#c8c8c8;"></div>
<div style="left:538px;top:562px;width:1px;height:4px;background:#d8d8d8;"></div>
<div style="left:552px;top:563px;width:1px;height:3px;background:#c8c8c8;"></div>
<div style="left:566px;top:562px;width:1px;height:4px;background:#d8d8d8;"></div>
<div style="left:580px;top:563px;width:1px;height:3px;background:#c8c8c8;"></div>
<div style="left:594px;top:562px;width:1px;height:4px;background:#d8d8d8;"></div>
<div style="left:608px;top:559px;width:1px;height:8px;background:#e8e8e8;"></div>
<div style="left:621px;top:562px;width:1px;height:4px;background:#d8d8d8;"></div>
<div style="left:635px;top:563px;width:1px;height:3px;background:#c8c8c8;"></div>
<div style="left:649px;top:562px;width:1px;height:4px;background:#d8d8d8;"></div>
<div style="left:663px;top:563px;width:1px;height:3px;background:#c8c8c8;"></div>
<div style="left:677px;top:562px;width:1px;height:4px;background:#d8d8d8;"></div>
<div style="left:691px;top:563px;width:1px;height:3px;background:#c8c8c8;"></div>
<div style="left:705px;top:562px;width:1px;height:4px;background:#d8d8d8;"></div>
<div style="left:718px;top:563px;width:1px;height:3px;background:#c8c8c8;"></div>
<div style="left:732px;top:562px;width:1px;height:4px;background:#d8d8d8;"></div>
<div style="left:746px;top:559px;width:1px;height:8px;background:#e8e8e8;"></div>
<div style="left:760px;top:562px;width:1px;height:4px;background:#d8d8d8;"></div>
<div style="left:774px;top:563px;width:1px;height:3px;background:#c8c8c8;"></div>
<div style="left:788px;top:562px;width:1px;height:4px;background:#d8d8d8;"></div>
<div style="left:801px;top:563px;width:1px;height:3px;background:#c8c8c8;"></div>
<div style="left:815px;top:562px;width:1px;height:4px;background:#d8d8d8;"></div>
<div style="left:829px;top:563px;width:1px;height:3px;background:#c8c8c8;"></div>
<div style="left:843px;top:562px;width:1px;height:4px;background:#d8d8d8;"></div>
<div style="left:857px;top:563px;width:1px;height:3px;background:#c8c8c8;"></div>
<div style="left:871px;top:562px;width:1px;height:4px;background:#d8d8d8;"></div>
<div style="left:884px;top:559px;width:1px;height:13px;background:#e8e8e8;"></div>
<div style="left:886px;top:549px;width:1px;height:32px;background:#0a0a0a;"></div>
<span style="left:93.5px;top:569px;width:200px;text-align:center;font-size:10px;color:#e4e4e4;">50</span>
<span style="left:231.5px;top:569px;width:200px;text-align:center;font-size:10px;color:#e4e4e4;">100</span>
<span style="left:369.5px;top:569px;width:200px;text-align:center;font-size:10px;color:#e4e4e4;">150</span>
<span style="left:508.5px;top:569px;width:200px;text-align:center;font-size:10px;color:#e4e4e4;">200</span>
<span style="left:646.5px;top:569px;width:200px;text-align:center;font-size:10px;color:#e4e4e4;">250</span>
<span style="left:57.5px;top:569px;font-size:10px;color:#e4e4e4;">1</span>
<span style="left:826px;top:569px;width:60px;text-align:right;font-size:10px;color:#e4e4e4">300</span>
<span style="left:58px;top:546px;font-size:8px;color:#f7931e;">1</span>
<svg style="left:51px;top:557px" width="13" height="8" viewBox="0 0 13 8"><path d="M0 0H13L6.5 7.6Z" fill="#f7931e"/></svg>
<div style="left:57px;top:564px;width:1px;height:6px;background:#d0d0d0;"></div>
<div style="left:57px;top:570px;width:1px;height:1px;background:#3a7a3a;"></div>
<div style="left:893px;top:550px;width:48px;height:30px;background:#3a3a3a;border-radius:4px"></div>
<span style="left:817px;top:559px;width:200px;text-align:center;font-size:11px;color:#8a8a8a;">300</span>
<svg style="left:947px;top:570px" width="8" height="11" viewBox="0 0 8 11"><path d="M0.4 0.3L4 5.2L7.6 0.3M0.4 4.4L4 9.4L7.6 4.4" fill="none" stroke="#949494" stroke-width="1.25"/></svg>
<div style="left:2.5px;top:586.5px;width:60px;height:19.5px;background:#3a3a3a;border:1px solid #1f1f1f;box-sizing:border-box;border-radius:4px"></div>
<div style="left:46.5px;top:587.5px;width:15px;height:17.5px;background:#4c4c4c;border-left:1px solid #1f1f1f;border-radius:0 3px 3px 0"></div>
<span style="left:6.5px;top:589px;font-size:11px;color:#dadada;">24*</span>
<svg style="left:52px;top:594.5px" width="5.4" height="3.6" viewBox="0 0 5.4 3.6"><path d="M0 0H5.4L2.7 3.6Z" fill="#dcdcdc"/></svg>
<span style="left:69.8px;top:589px;font-size:11px;color:#dadada;">TF</span>
<svg style="left:88px;top:593.5px" width="5.5" height="3.5" viewBox="0 0 5.5 3.5"><path d="M0 0H5.5L2.75 3.5Z" fill="#dcdcdc"/></svg>
<div style="left:99.5px;top:586px;width:1px;height:19px;background:#191919;"></div>
<div style="left:100.5px;top:586px;width:1px;height:19px;background:#484848;"></div>
<span style="left:108.9px;top:589px;font-size:11px;color:#dadada;">Global</span>
<svg style="left:158.5px;top:593.5px" width="5.4" height="3.6" viewBox="0 0 5.4 3.6"><path d="M0 0H5.4L2.7 3.6Z" fill="#dcdcdc"/></svg>
<div style="left:170.5px;top:586px;width:1px;height:19px;background:#191919;"></div>
<div style="left:171.5px;top:586px;width:1px;height:19px;background:#484848;"></div>
<svg style="left:251px;top:589px" width="20" height="15" viewBox="0 0 20 15"><path d="M1 4H11" stroke="#a9a9a9" stroke-width="2"/><path d="M10 0.5L15 4L10 7.5Z" fill="#a9a9a9"/><path d="M13.5 7.5A5 4.2 0 0 1 3.4 9.6" fill="none" stroke="#a9a9a9" stroke-width="2"/><path d="M0.6 7.2L6.4 8L2.6 12.6Z" fill="#a9a9a9"/><path d="M14 11.5H19.5L16.75 14.5Z" fill="#e0e0e0"/></svg>
<div style="left:279.0px;top:584px;width:18px;height:23.5px;background:#4a4a4a;border:1.3px solid #222;box-sizing:border-box;border-radius:4px"></div>
<span style="left:188.0px;top:589px;width:200px;text-align:center;font-size:11px;color:#e4e4e4;font-family:'DejaVu Serif','Liberation Serif',serif">I</span>
<div style="left:297.0px;top:584px;width:31.5px;height:23.5px;background:#4a4a4a;border:1.3px solid #222;box-sizing:border-box;border-radius:4px"></div>
<svg style="left:297.5px;top:585px" width="30.5" height="22" viewBox="0 0 30.5 22"><rect x="9" y="4.4" width="4" height="12.4" fill="url(#bg)"/><path d="M21.8 4.4V16.8L13.400000000000002 10.6Z" fill="url(#bg)"/></svg>
<div style="left:329.0px;top:584px;width:31.5px;height:23.5px;background:#4a4a4a;border:1.3px solid #222;box-sizing:border-box;border-radius:4px"></div>
<svg style="left:329.5px;top:585px" width="30.5" height="22" viewBox="0 0 30.5 22"><circle cx="10.2" cy="14.4" r="1.9" fill="none" stroke="#a9a9a9" stroke-width="1.2"/><path d="M10.2 12.6V5.6H12.2" stroke="#a9a9a9" stroke-width="1.2" fill="none"/><path d="M22.8 4.4V16.8L14.400000000000002 10.6Z" fill="url(#bg)"/></svg>
<div style="left:361.0px;top:584px;width:31.5px;height:23.5px;background:#4a4a4a;border:1.3px solid #222;box-sizing:border-box;border-radius:4px"></div>
<svg style="left:361.5px;top:585px" width="30.5" height="22" viewBox="0 0 30.5 22"><path d="M17.6 4.4V16.8L9.2 10.6Z" fill="url(#bg)"/><rect x="18.4" y="4.4" width="2.6" height="12.4" fill="url(#bg)"/></svg>
<div style="left:393.0px;top:584px;width:31.5px;height:23.5px;background:#4a4a4a;border:1.3px solid #222;box-sizing:border-box;border-radius:4px"></div>
<svg style="left:393.5px;top:585px" width="30.5" height="22" viewBox="0 0 30.5 22"><path d="M18.8 4.4V16.8L10.399999999999999 10.6Z" fill="url(#bg)"/></svg>
<div style="left:426.0px;top:586px;width:47.5px;height:20.5px;background:#353535;border-radius:4px"></div>
<span style="left:349.5px;top:589px;width:200px;text-align:center;font-size:11px;color:#f7931e;">1</span>
<div style="left:474.5px;top:584px;width:31.5px;height:23.5px;background:#4a4a4a;border:1.3px solid #222;box-sizing:border-box;border-radius:4px"></div>
<svg style="left:475.0px;top:585px" width="30.5" height="22" viewBox="0 0 30.5 22"><path d="M11.600000000000001 4.4V16.8L20.0 10.6Z" fill="url(#bg)"/></svg>
<div style="left:506.5px;top:584px;width:31.5px;height:23.5px;background:#4a4a4a;border:1.3px solid #222;box-sizing:border-box;border-radius:4px"></div>
<svg style="left:507.0px;top:585px" width="30.5" height="22" viewBox="0 0 30.5 22"><rect x="9.6" y="4.4" width="2.6" height="12.4" fill="url(#bg)"/><path d="M13.0 4.4V16.8L21.4 10.6Z" fill="url(#bg)"/></svg>
<div style="left:538.5px;top:584px;width:31.5px;height:23.5px;background:#4a4a4a;border:1.3px solid #222;box-sizing:border-box;border-radius:4px"></div>
<svg style="left:539.0px;top:585px" width="30.5" height="22" viewBox="0 0 30.5 22"><path d="M7.999999999999999 4.4V16.8L16.4 10.6Z" fill="url(#bg)"/><circle cx="20.4" cy="14.4" r="1.9" fill="none" stroke="#a9a9a9" stroke-width="1.2"/><path d="M20.4 12.6V5.6H22.4" stroke="#a9a9a9" stroke-width="1.2" fill="none"/></svg>
<div style="left:570.5px;top:584px;width:31.5px;height:23.5px;background:#4a4a4a;border:1.3px solid #222;box-sizing:border-box;border-radius:4px"></div>
<svg style="left:571.0px;top:585px" width="30.5" height="22" viewBox="0 0 30.5 22"><path d="M8.8 4.4V16.8L17.2 10.6Z" fill="url(#bg)"/><rect x="17.6" y="4.4" width="4" height="12.4" fill="url(#bg)"/></svg>
<div style="left:602.5px;top:584px;width:18px;height:23.5px;background:#4a4a4a;border:1.3px solid #222;box-sizing:border-box;border-radius:4px"></div>
<span style="left:511.5px;top:589px;width:200px;text-align:center;font-size:11px;color:#e4e4e4;">O</span>
<div style="left:633.0px;top:585px;width:22px;height:21.5px;background:#4a4a4a;border:1.3px solid #222;box-sizing:border-box;border-radius:4px"></div>
<svg style="left:633.5px;top:586px" width="21" height="20" viewBox="0 0 21 20"><path d="M10.5 7V13L5.5 10ZM15.5 7V13L10.5 10Z" fill="#a9a9a9"/></svg>
<div style="left:656.0px;top:586px;width:21.5px;height:20px;background:#2b2b2b;border:1px solid #222;box-sizing:border-box;border-radius:3px"></div>
<span style="left:567.0px;top:589px;width:200px;text-align:center;font-size:11px;color:#e4e4e4;">10</span>
<div style="left:679.0px;top:585px;width:22px;height:21.5px;background:#4a4a4a;border:1.3px solid #222;box-sizing:border-box;border-radius:4px"></div>
<svg style="left:679.5px;top:586px" width="21" height="20" viewBox="0 0 21 20"><path d="M5.5 7V13L10.5 10ZM10.5 7V13L15.5 10Z" fill="#a9a9a9"/></svg>
<svg style="left:804px;top:590px" width="14" height="12" viewBox="0 0 14 12"><rect width="14" height="12" fill="#b0b0b0"/><path d="M3.5 2.2V9.8L11 6Z" fill="#2a2a2a"/></svg>
<svg style="left:826px;top:590px" width="14" height="12" viewBox="0 0 14 12"><rect width="14" height="12" fill="#b0b0b0"/><circle cx="7" cy="6" r="3.6" fill="#2a2a2a"/></svg>
<svg style="left:849px;top:588px" width="12" height="14" viewBox="0 0 12 14"><path d="M3 6.5V4.2A3 3 0 0 1 9 4.2V6.5" fill="none" stroke="#b0b0b0" stroke-width="1.6"/><rect x="0" y="6" width="12" height="8" fill="#b0b0b0"/><circle cx="6" cy="9.2" r="1.1" fill="#2a2a2a"/><rect x="5.5" y="9.5" width="1" height="2.6" fill="#2a2a2a"/></svg>
<svg style="left:871px;top:588px" width="16" height="14" viewBox="0 0 16 14"><path d="M6.5 0L11 4L6.5 8Z" fill="#b0b0b0"/><path d="M0.5 9V13.5H15.5V9M4 11.5V13.5M8 10.5V13.5M12 11.5V13.5" fill="none" stroke="#b0b0b0" stroke-width="1"/></svg>
<div style="left:893px;top:585px;width:48px;height:21.5px;background:#353535;border-radius:4px"></div>
<span style="left:817px;top:589px;width:200px;text-align:center;font-size:11px;color:#e4e4e4;">300</span>
<div style="left:1014px;top:549px;width:834.5999999999999px;height:32px;background:#2d2d2d;"></div>
<div style="left:1019px;top:544px;width:830px;height:3px;background:#686868;"></div>
<div style="left:966px;top:550px;width:48px;height:30px;background:#3a3a3a;border-radius:4px"></div>
<span style="left:890px;top:559px;width:200px;text-align:center;font-size:11px;color:#8a8a8a;">1</span>
<div style="left:1031px;top:562px;width:1px;height:4px;background:#d8d8d8;"></div>
<div style="left:1045px;top:563px;width:1px;height:3px;background:#c8c8c8;"></div>
<div style="left:1059px;top:562px;width:1px;height:4px;background:#d8d8d8;"></div>
<div style="left:1073px;top:563px;width:1px;height:3px;background:#c8c8c8;"></div>
<div style="left:1087px;top:562px;width:1px;height:4px;background:#d8d8d8;"></div>
<div style="left:1100px;top:563px;width:1px;height:3px;background:#c8c8c8;"></div>
<div style="left:1114px;top:562px;width:1px;height:4px;background:#d8d8d8;"></div>
<div style="left:1128px;top:563px;width:1px;height:3px;background:#c8c8c8;"></div>
<div style="left:1142px;top:562px;width:1px;height:4px;background:#d8d8d8;"></div>
<div style="left:1156px;top:559px;width:1px;height:8px;background:#e8e8e8;"></div>
<div style="left:1170px;top:562px;width:1px;height:4px;background:#d8d8d8;"></div>
<div style="left:1183px;top:563px;width:1px;height:3px;background:#c8c8c8;"></div>
<div style="left:1197px;top:562px;width:1px;height:4px;background:#d8d8d8;"></div>
<div style="left:1211px;top:563px;width:1px;height:3px;background:#c8c8c8;"></div>
<div style="left:1225px;top:562px;width:1px;height:4px;background:#d8d8d8;"></div>
<div style="left:1239px;top:563px;width:1px;height:3px;background:#c8c8c8;"></div>
<div style="left:1252px;top:562px;width:1px;height:4px;background:#d8d8d8;"></div>
<div style="left:1266px;top:563px;width:1px;height:3px;background:#c8c8c8;"></div>
<div style="left:1280px;top:562px;width:1px;height:4px;background:#d8d8d8;"></div>
<div style="left:1294px;top:559px;width:1px;height:8px;background:#e8e8e8;"></div>
<div style="left:1308px;top:562px;width:1px;height:4px;background:#d8d8d8;"></div>
<div style="left:1321px;top:563px;width:1px;height:3px;background:#c8c8c8;"></div>
<div style="left:1335px;top:562px;width:1px;height:4px;background:#d8d8d8;"></div>
<div style="left:1349px;top:563px;width:1px;height:3px;background:#c8c8c8;"></div>
<div style="left:1363px;top:562px;width:1px;height:4px;background:#d8d8d8;"></div>
<div style="left:1377px;top:563px;width:1px;height:3px;background:#c8c8c8;"></div>
<div style="left:1390px;top:562px;width:1px;height:4px;background:#d8d8d8;"></div>
<div style="left:1404px;top:563px;width:1px;height:3px;background:#c8c8c8;"></div>
<div style="left:1418px;top:562px;width:1px;height:4px;background:#d8d8d8;"></div>
<div style="left:1432px;top:559px;width:1px;height:8px;background:#e8e8e8;"></div>
<div style="left:1446px;top:562px;width:1px;height:4px;background:#d8d8d8;"></div>
<div style="left:1459px;top:563px;width:1px;height:3px;background:#c8c8c8;"></div>
<div style="left:1473px;top:562px;width:1px;height:4px;background:#d8d8d8;"></div>
<div style="left:1487px;top:563px;width:1px;height:3px;background:#c8c8c8;"></div>
<div style="left:1501px;top:562px;width:1px;height:4px;background:#d8d8d8;"></div>
<div style="left:1515px;top:563px;width:1px;height:3px;background:#c8c8c8;"></div>
<div style="left:1528px;top:562px;width:1px;height:4px;background:#d8d8d8;"></div>
<div style="left:1542px;top:563px;width:1px;height:3px;background:#c8c8c8;"></div>
<div style="left:1556px;top:562px;width:1px;height:4px;background:#d8d8d8;"></div>
<div style="left:1570px;top:559px;width:1px;height:8px;background:#e8e8e8;"></div>
<div style="left:1584px;top:562px;width:1px;height:4px;background:#d8d8d8;"></div>
<div style="left:1597px;top:563px;width:1px;height:3px;background:#c8c8c8;"></div>
<div style="left:1611px;top:562px;width:1px;height:4px;background:#d8d8d8;"></div>
<div style="left:1625px;top:563px;width:1px;height:3px;background:#c8c8c8;"></div>
<div style="left:1639px;top:562px;width:1px;height:4px;background:#d8d8d8;"></div>
<div style="left:1653px;top:563px;width:1px;height:3px;background:#c8c8c8;"></div>
<div style="left:1667px;top:562px;width:1px;height:4px;background:#d8d8d8;"></div>
<div style="left:1680px;top:563px;width:1px;height:3px;background:#c8c8c8;"></div>
<div style="left:1694px;top:562px;width:1px;height:4px;background:#d8d8d8;"></div>
<div style="left:1708px;top:559px;width:1px;height:8px;background:#e8e8e8;"></div>
<div style="left:1722px;top:562px;width:1px;height:4px;background:#d8d8d8;"></div>
<div style="left:1736px;top:563px;width:1px;height:3px;background:#c8c8c8;"></div>
<div style="left:1749px;top:562px;width:1px;height:4px;background:#d8d8d8;"></div>
<div style="left:1763px;top:563px;width:1px;height:3px;background:#c8c8c8;"></div>
<div style="left:1777px;top:562px;width:1px;height:4px;background:#d8d8d8;"></div>
<div style="left:1791px;top:563px;width:1px;height:3px;background:#c8c8c8;"></div>
<div style="left:1805px;top:562px;width:1px;height:4px;background:#d8d8d8;"></div>
<div style="left:1818px;top:563px;width:1px;height:3px;background:#c8c8c8;"></div>
<div style="left:1832px;top:562px;width:1px;height:4px;background:#d8d8d8;"></div>
<div style="left:1846px;top:559px;width:1px;height:13px;background:#e8e8e8;"></div>
<div style="left:1848px;top:549px;width:1px;height:32px;background:#0a0a0a;"></div>
<span style="left:1056.5px;top:569px;width:200px;text-align:center;font-size:10px;color:#e4e4e4;">50</span>
<span style="left:1194.5px;top:569px;width:200px;text-align:center;font-size:10px;color:#e4e4e4;">100</span>
<span style="left:1332.5px;top:569px;width:200px;text-align:center;font-size:10px;color:#e4e4e4;">150</span>
<span style="left:1470.5px;top:569px;width:200px;text-align:center;font-size:10px;color:#e4e4e4;">200</span>
<span style="left:1608.5px;top:569px;width:200px;text-align:center;font-size:10px;color:#e4e4e4;">250</span>
<span style="left:1020.5px;top:569px;font-size:10px;color:#e4e4e4;">1</span>
<span style="left:1788px;top:569px;width:60px;text-align:right;font-size:10px;color:#e4e4e4">300</span>
<span style="left:1021px;top:546px;font-size:8px;color:#f7931e;">1</span>
<svg style="left:1014px;top:557px" width="13" height="8" viewBox="0 0 13 8"><path d="M0 0H13L6.5 7.6Z" fill="#f7931e"/></svg>
<div style="left:1020px;top:564px;width:1px;height:6px;background:#d0d0d0;"></div>
<div style="left:1020px;top:570px;width:1px;height:1px;background:#3a7a3a;"></div>
<div style="left:1854px;top:550px;width:48px;height:30px;background:#3a3a3a;border-radius:4px"></div>
<span style="left:1778px;top:559px;width:200px;text-align:center;font-size:11px;color:#8a8a8a;">300</span>
<svg style="left:1908px;top:570px" width="8" height="11" viewBox="0 0 8 11"><path d="M0.4 0.3L4 5.2L7.6 0.3M0.4 4.4L4 9.4L7.6 4.4" fill="none" stroke="#949494" stroke-width="1.25"/></svg>
<div style="left:965.5px;top:586.5px;width:60px;height:19.5px;background:#3a3a3a;border:1px solid #1f1f1f;box-sizing:border-box;border-radius:4px"></div>
<div style="left:1009.5px;top:587.5px;width:15px;height:17.5px;background:#4c4c4c;border-left:1px solid #1f1f1f;border-radius:0 3px 3px 0"></div>
<span style="left:969.5px;top:589px;font-size:11px;color:#dadada;">24*</span>
<svg style="left:1015px;top:594.5px" width="5.4" height="3.6" viewBox="0 0 5.4 3.6"><path d="M0 0H5.4L2.7 3.6Z" fill="#dcdcdc"/></svg>
<span style="left:1032.8px;top:589px;font-size:11px;color:#dadada;">TF</span>
<svg style="left:1051px;top:593.5px" width="5.5" height="3.5" viewBox="0 0 5.5 3.5"><path d="M0 0H5.5L2.75 3.5Z" fill="#dcdcdc"/></svg>
<div style="left:1062.5px;top:586px;width:1px;height:19px;background:#191919;"></div>
<div style="left:1063.5px;top:586px;width:1px;height:19px;background:#484848;"></div>
<span style="left:1071.9px;top:589px;font-size:11px;color:#dadada;">Global</span>
<svg style="left:1121.5px;top:593.5px" width="5.4" height="3.6" viewBox="0 0 5.4 3.6"><path d="M0 0H5.4L2.7 3.6Z" fill="#dcdcdc"/></svg>
<div style="left:1133.5px;top:586px;width:1px;height:19px;background:#191919;"></div>
<div style="left:1134.5px;top:586px;width:1px;height:19px;background:#484848;"></div>
<svg style="left:1213px;top:589px" width="20" height="15" viewBox="0 0 20 15"><path d="M1 4H11" stroke="#a9a9a9" stroke-width="2"/><path d="M10 0.5L15 4L10 7.5Z" fill="#a9a9a9"/><path d="M13.5 7.5A5 4.2 0 0 1 3.4 9.6" fill="none" stroke="#a9a9a9" stroke-width="2"/><path d="M0.6 7.2L6.4 8L2.6 12.6Z" fill="#a9a9a9"/><path d="M14 11.5H19.5L16.75 14.5Z" fill="#e0e0e0"/></svg>
<div style="left:1241.0px;top:584px;width:18px;height:23.5px;background:#4a4a4a;border:1.3px solid #222;box-sizing:border-box;border-radius:4px"></div>
<span style="left:1150.0px;top:589px;width:200px;text-align:center;font-size:11px;color:#e4e4e4;font-family:'DejaVu Serif','Liberation Serif',serif">I</span>
<div style="left:1259.0px;top:584px;width:31.5px;height:23.5px;background:#4a4a4a;border:1.3px solid #222;box-sizing:border-box;border-radius:4px"></div>
<svg style="left:1259.5px;top:585px" width="30.5" height="22" viewBox="0 0 30.5 22"><rect x="9" y="4.4" width="4" height="12.4" fill="url(#bg)"/><path d="M21.8 4.4V16.8L13.400000000000002 10.6Z" fill="url(#bg)"/></svg>
<div style="left:1291.0px;top:584px;width:31.5px;height:23.5px;background:#4a4a4a;border:1.3px solid #222;box-sizing:border-box;border-radius:4px"></div>
<svg style="left:1291.5px;top:585px" width="30.5" height="22" viewBox="0 0 30.5 22"><circle cx="10.2" cy="14.4" r="1.9" fill="none" stroke="#a9a9a9" stroke-width="1.2"/><path d="M10.2 12.6V5.6H12.2" stroke="#a9a9a9" stroke-width="1.2" fill="none"/><path d="M22.8 4.4V16.8L14.400000000000002 10.6Z" fill="url(#bg)"/></svg>
<div style="left:1323.0px;top:584px;width:31.5px;height:23.5px;background:#4a4a4a;border:1.3px solid #222;box-sizing:border-box;border-radius:4px"></div>
<svg style="left:1323.5px;top:585px" width="30.5" height="22" viewBox="0 0 30.5 22"><path d="M17.6 4.4V16.8L9.2 10.6Z" fill="url(#bg)"/><rect x="18.4" y="4.4" width="2.6" height="12.4" fill="url(#bg)"/></svg>
<div style="left:1355.0px;top:584px;width:31.5px;height:23.5px;background:#4a4a4a;border:1.3px solid #222;box-sizing:border-box;border-radius:4px"></div>
<svg style="left:1355.5px;top:585px" width="30.5" height="22" viewBox="0 0 30.5 22"><path d="M18.8 4.4V16.8L10.399999999999999 10.6Z" fill="url(#bg)"/></svg>
<div style="left:1388.0px;top:586px;width:47.5px;height:20.5px;background:#353535;border-radius:4px"></div>
<span style="left:1311.5px;top:589px;width:200px;text-align:center;font-size:11px;color:#f7931e;">1</span>
<div style="left:1436.5px;top:584px;width:31.5px;height:23.5px;background:#4a4a4a;border:1.3px solid #222;box-sizing:border-box;border-radius:4px"></div>
<svg style="left:1437.0px;top:585px" width="30.5" height="22" viewBox="0 0 30.5 22"><path d="M11.600000000000001 4.4V16.8L20.0 10.6Z" fill="url(#bg)"/></svg>
<div style="left:1468.5px;top:584px;width:31.5px;height:23.5px;background:#4a4a4a;border:1.3px solid #222;box-sizing:border-box;border-radius:4px"></div>
<svg style="left:1469.0px;top:585px" width="30.5" height="22" viewBox="0 0 30.5 22"><rect x="9.6" y="4.4" width="2.6" height="12.4" fill="url(#bg)"/><path d="M13.0 4.4V16.8L21.4 10.6Z" fill="url(#bg)"/></svg>
<div style="left:1500.5px;top:584px;width:31.5px;height:23.5px;background:#4a4a4a;border:1.3px solid #222;box-sizing:border-box;border-radius:4px"></div>
<svg style="left:1501.0px;top:585px" width="30.5" height="22" viewBox="0 0 30.5 22"><path d="M7.999999999999999 4.4V16.8L16.4 10.6Z" fill="url(#bg)"/><circle cx="20.4" cy="14.4" r="1.9" fill="none" stroke="#a9a9a9" stroke-width="1.2"/><path d="M20.4 12.6V5.6H22.4" stroke="#a9a9a9" stroke-width="1.2" fill="none"/></svg>
<div style="left:1532.5px;top:584px;width:31.5px;height:23.5px;background:#4a4a4a;border:1.3px solid #222;box-sizing:border-box;border-radius:4px"></div>
<svg style="left:1533.0px;top:585px" width="30.5" height="22" viewBox="0 0 30.5 22"><path d="M8.8 4.4V16.8L17.2 10.6Z" fill="url(#bg)"/><rect x="17.6" y="4.4" width="4" height="12.4" fill="url(#bg)"/></svg>
<div style="left:1564.5px;top:584px;width:18px;height:23.5px;background:#4a4a4a;border:1.3px solid #222;box-sizing:border-box;border-radius:4px"></div>
<span style="left:1473.5px;top:589px;width:200px;text-align:center;font-size:11px;color:#e4e4e4;">O</span>
<div style="left:1595.0px;top:585px;width:22px;height:21.5px;background:#4a4a4a;border:1.3px solid #222;box-sizing:border-box;border-radius:4px"></div>
<svg style="left:1595.5px;top:586px" width="21" height="20" viewBox="0 0 21 20"><path d="M10.5 7V13L5.5 10ZM15.5 7V13L10.5 10Z" fill="#a9a9a9"/></svg>
<div style="left:1618.0px;top:586px;width:21.5px;height:20px;background:#2b2b2b;border:1px solid #222;box-sizing:border-box;border-radius:3px"></div>
<span style="left:1529.0px;top:589px;width:200px;text-align:center;font-size:11px;color:#e4e4e4;">10</span>
<div style="left:1641.0px;top:585px;width:22px;height:21.5px;background:#4a4a4a;border:1.3px solid #222;box-sizing:border-box;border-radius:4px"></div>
<svg style="left:1641.5px;top:586px" width="21" height="20" viewBox="0 0 21 20"><path d="M5.5 7V13L10.5 10ZM10.5 7V13L15.5 10Z" fill="#a9a9a9"/></svg>
<svg style="left:1765px;top:590px" width="14" height="12" viewBox="0 0 14 12"><rect width="14" height="12" fill="#b0b0b0"/><path d="M3.5 2.2V9.8L11 6Z" fill="#2a2a2a"/></svg>
<svg style="left:1787px;top:590px" width="14" height="12" viewBox="0 0 14 12"><rect width="14" height="12" fill="#b0b0b0"/><circle cx="7" cy="6" r="3.6" fill="#2a2a2a"/></svg>
<svg style="left:1810px;top:588px" width="12" height="14" viewBox="0 0 12 14"><path d="M3 6.5V4.2A3 3 0 0 1 9 4.2V6.5" fill="none" stroke="#b0b0b0" stroke-width="1.6"/><rect x="0" y="6" width="12" height="8" fill="#b0b0b0"/><circle cx="6" cy="9.2" r="1.1" fill="#2a2a2a"/><rect x="5.5" y="9.5" width="1" height="2.6" fill="#2a2a2a"/></svg>
<svg style="left:1832px;top:588px" width="16" height="14" viewBox="0 0 16 14"><path d="M6.5 0L11 4L6.5 8Z" fill="#b0b0b0"/><path d="M0.5 9V13.5H15.5V9M4 11.5V13.5M8 10.5V13.5M12 11.5V13.5" fill="none" stroke="#b0b0b0" stroke-width="1"/></svg>
<div style="left:1854px;top:585px;width:48px;height:21.5px;background:#353535;border-radius:4px"></div>
<span style="left:1778px;top:589px;width:200px;text-align:center;font-size:11px;color:#e4e4e4;">300</span>
<div style="left:960px;top:23px;width:1px;height:588px;background:#000;"></div>
<div style="left:961px;top:23px;width:1px;height:588px;background:#484848;"></div>
<div style="left:0px;top:610px;width:1920px;height:1px;background:#262626;"></div>
<div style="left:0px;top:611px;width:1920px;height:1px;background:#000;"></div>
<div style="left:0px;top:612px;width:1920px;height:1px;background:#4a4a4a;"></div>
<div style="left:0px;top:613px;width:1920px;height:1px;background:#383838;"></div>
<svg style="left:0;top:614px" width="1920" height="586" viewBox="0 614 1920 586">
<defs>
<linearGradient id="tg" x1="0" y1="0" x2="0" y2="1"><stop offset="0" stop-color="#acdc76"/><stop offset="0.5" stop-color="#8ac456"/><stop offset="1" stop-color="#5e963c"/></linearGradient>
<radialGradient id="tv" cx="0.5" cy="0.3" r="0.75"><stop offset="0.55" stop-color="#000" stop-opacity="0"/><stop offset="1" stop-color="#0a1a00" stop-opacity="0.28"/></radialGradient>
<linearGradient id="ng" x1="0" y1="0" x2="0" y2="1"><stop offset="0" stop-color="#f6f6f6"/><stop offset="0.45" stop-color="#c9c9c9"/><stop offset="1" stop-color="#8e8e8e"/></linearGradient>
</defs>
<path d="M463.3 728.0L463.3 805.0" stroke="#000" stroke-width="2.0" fill="none"/><path d="M463.3 815.0L459.3 804.0L467.3 804.0Z" fill="#000"/>
<path d="M467.3 820.5L1013.5 820.4" stroke="#000" stroke-width="2.0" fill="none"/><path d="M1023.5 820.4L1012.5 824.4L1012.5 816.4Z" fill="#000"/>
<path d="M1031.2 823.7L1204.7 1080.3" stroke="#000" stroke-width="2.0" fill="none"/><path d="M1211.4 1090.2L1200.9 1081.6L1207.2 1077.3Z" fill="#000"/>
<path d="M562.8 727.0L562.8 795.0" stroke="#000" stroke-width="2.0" fill="none"/><path d="M562.8 805.0L558.8 794.0L566.8 794.0Z" fill="#000"/>
<path d="M566.8 810.5L1023.5 810.4" stroke="#000" stroke-width="2.0" fill="none"/><path d="M1033.5 810.4L1022.5 814.4L1022.5 806.4Z" fill="#000"/>
<path d="M1041.1 813.8L1205.6 1080.0" stroke="#000" stroke-width="2.0" fill="none"/><path d="M1211.9 1090.2L1201.9 1081.1L1208.3 1077.1Z" fill="#000"/>
<path d="M663.0 725.0L663.0 785.0" stroke="#000" stroke-width="2.0" fill="none"/><path d="M663.0 795.0L659.0 784.0L667.0 784.0Z" fill="#000"/>
<path d="M667.0 800.5L1033.5 800.4" stroke="#000" stroke-width="2.0" fill="none"/><path d="M1043.5 800.4L1032.5 804.4L1032.5 796.4Z" fill="#000"/>
<path d="M1051.0 803.9L1206.6 1079.7" stroke="#000" stroke-width="2.0" fill="none"/><path d="M1212.5 1090.2L1202.8 1080.7L1209.4 1077.0Z" fill="#000"/>
<path d="M763.2 725.0L763.2 775.1" stroke="#000" stroke-width="2.0" fill="none"/><path d="M763.2 785.1L759.2 774.1L767.2 774.1Z" fill="#000"/>
<path d="M767.2 790.6L1043.5 790.5" stroke="#000" stroke-width="2.0" fill="none"/><path d="M1053.5 790.5L1042.5 794.5L1042.5 786.5Z" fill="#000"/>
<path d="M1060.8 794.1L1207.5 1079.5" stroke="#000" stroke-width="2.0" fill="none"/><path d="M1213.0 1090.2L1203.6 1080.4L1210.4 1076.9Z" fill="#000"/>
<path d="M863.3 725.0L863.3 765.1" stroke="#000" stroke-width="2.0" fill="none"/><path d="M863.3 775.1L859.3 764.1L867.3 764.1Z" fill="#000"/>
<path d="M867.3 780.6L1054.5 780.5" stroke="#000" stroke-width="2.0" fill="none"/><path d="M1064.5 780.5L1053.5 784.5L1053.5 776.5Z" fill="#000"/>
<path d="M1071.7 784.1L1208.4 1079.3" stroke="#000" stroke-width="2.0" fill="none"/><path d="M1213.5 1090.2L1204.5 1080.0L1211.4 1076.8Z" fill="#000"/>
<path d="M963.3 723.0L963.3 755.1" stroke="#000" stroke-width="2.0" fill="none"/><path d="M963.3 765.1L959.3 754.1L967.3 754.1Z" fill="#000"/>
<path d="M967.3 770.6L1066.0 770.4" stroke="#000" stroke-width="2.0" fill="none"/><path d="M1076.0 770.4L1065.0 774.4L1065.0 766.4Z" fill="#000"/>
<path d="M1083.0 774.1L1209.3 1079.1" stroke="#000" stroke-width="2.0" fill="none"/><path d="M1213.9 1090.2L1205.5 1079.6L1212.5 1076.7Z" fill="#000"/>
<path d="M460.0 918.0L460.0 955.0" stroke="#000" stroke-width="2.0" fill="none"/><path d="M460.0 965.0L456.0 954.0L464.0 954.0Z" fill="#000"/>
<path d="M464.0 970.5L1013.5 970.3" stroke="#000" stroke-width="2.0" fill="none"/><path d="M1023.5 970.3L1012.5 974.3L1012.5 966.3Z" fill="#000"/>
<path d="M1032.3 972.6L1193.8 1083.4" stroke="#000" stroke-width="2.0" fill="none"/><path d="M1203.7 1090.2L1190.9 1086.0L1195.2 1079.7Z" fill="#000"/>
<path d="M554.0 914.0L554.0 945.0" stroke="#000" stroke-width="2.0" fill="none"/><path d="M554.0 955.0L550.0 944.0L558.0 944.0Z" fill="#000"/>
<path d="M558.0 960.5L1023.5 960.3" stroke="#000" stroke-width="2.0" fill="none"/><path d="M1033.5 960.3L1022.5 964.3L1022.5 956.3Z" fill="#000"/>
<path d="M1042.2 962.8L1196.0 1082.8" stroke="#000" stroke-width="2.0" fill="none"/><path d="M1205.4 1090.2L1192.9 1085.2L1197.5 1079.2Z" fill="#000"/>
<path d="M654.0 913.0L654.0 935.0" stroke="#000" stroke-width="2.0" fill="none"/><path d="M654.0 945.0L650.0 934.0L658.0 934.0Z" fill="#000"/>
<path d="M658.0 950.5L1033.5 950.3" stroke="#000" stroke-width="2.0" fill="none"/><path d="M1043.5 950.3L1032.5 954.3L1032.5 946.3Z" fill="#000"/>
<path d="M1052.0 953.0L1198.0 1082.2" stroke="#000" stroke-width="2.0" fill="none"/><path d="M1206.9 1090.2L1194.7 1084.4L1199.7 1078.7Z" fill="#000"/>
<path d="M772.3 910.0L772.3 925.0" stroke="#000" stroke-width="2.0" fill="none"/><path d="M772.3 935.0L768.3 924.0L776.3 924.0Z" fill="#000"/>
<path d="M776.3 940.5L1043.5 940.4" stroke="#000" stroke-width="2.0" fill="none"/><path d="M1053.5 940.4L1042.5 944.4L1042.5 936.4Z" fill="#000"/>
<path d="M1061.8 943.2L1199.8 1081.7" stroke="#000" stroke-width="2.0" fill="none"/><path d="M1208.2 1090.2L1196.4 1083.7L1201.8 1078.3Z" fill="#000"/>
<path d="M863.3 909.0L863.3 915.0" stroke="#000" stroke-width="2.0" fill="none"/><path d="M863.3 925.0L859.3 914.0L867.3 914.0Z" fill="#000"/>
<path d="M867.3 930.5L1053.5 930.4" stroke="#000" stroke-width="2.0" fill="none"/><path d="M1063.5 930.4L1052.5 934.4L1052.5 926.4Z" fill="#000"/>
<path d="M1071.6 933.4L1201.5 1081.2" stroke="#000" stroke-width="2.0" fill="none"/><path d="M1209.4 1090.2L1198.0 1082.9L1203.7 1077.9Z" fill="#000"/>
<path d="M963.3 907.0L963.3 905.0" stroke="#000" stroke-width="2.0" fill="none"/><path d="M963.3 915.0L959.3 904.0L967.3 904.0Z" fill="#000"/>
<path d="M967.3 920.5L1063.5 920.3" stroke="#000" stroke-width="2.0" fill="none"/><path d="M1073.5 920.3L1062.5 924.3L1062.5 916.3Z" fill="#000"/>
<path d="M1081.4 923.5L1203.1 1080.7" stroke="#000" stroke-width="2.0" fill="none"/><path d="M1210.4 1090.2L1199.5 1082.2L1205.5 1077.6Z" fill="#000"/>
<path d="M469.0 1061.0L469.0 1105.0" stroke="#000" stroke-width="2.0" fill="none"/><path d="M469.0 1115.0L465.0 1104.0L473.0 1104.0Z" fill="#000"/>
<path d="M473.0 1120.5L1013.5 1120.3" stroke="#000" stroke-width="2.0" fill="none"/><path d="M1023.5 1120.3L1012.5 1124.3L1012.5 1116.3Z" fill="#000"/>
<path d="M1033.0 1119.9L1165.6 1105.6" stroke="#000" stroke-width="2.0" fill="none"/><path d="M1177.5 1104.3L1165.0 1109.5L1164.2 1102.0Z" fill="#000"/>
<path d="M569.0 1062.0L569.0 1095.0" stroke="#000" stroke-width="2.0" fill="none"/><path d="M569.0 1105.0L565.0 1094.0L573.0 1094.0Z" fill="#000"/>
<path d="M573.0 1110.5L1023.5 1110.3" stroke="#000" stroke-width="2.0" fill="none"/><path d="M1033.5 1110.3L1022.5 1114.3L1022.5 1106.3Z" fill="#000"/>
<path d="M1043.0 1110.1L1165.5 1103.0" stroke="#000" stroke-width="2.0" fill="none"/><path d="M1177.5 1102.3L1164.7 1106.9L1164.3 1099.3Z" fill="#000"/>
<path d="M669.0 1062.0L669.0 1085.0" stroke="#000" stroke-width="2.0" fill="none"/><path d="M669.0 1095.0L665.0 1084.0L673.0 1084.0Z" fill="#000"/>
<path d="M673.0 1100.5L1033.5 1100.3" stroke="#000" stroke-width="2.0" fill="none"/><path d="M1043.5 1100.3L1032.5 1104.3L1032.5 1096.3Z" fill="#000"/>
<path d="M1053.0 1100.3L1165.5 1100.1" stroke="#000" stroke-width="2.0" fill="none"/><path d="M1177.5 1100.1L1164.5 1103.9L1164.5 1096.3Z" fill="#000"/>
<path d="M769.0 1059.5L769.0 1075.0" stroke="#000" stroke-width="2.0" fill="none"/><path d="M769.0 1085.0L765.0 1074.0L773.0 1074.0Z" fill="#000"/>
<path d="M773.0 1090.5L1043.5 1090.3" stroke="#000" stroke-width="2.0" fill="none"/><path d="M1053.5 1090.3L1042.5 1094.3L1042.5 1086.3Z" fill="#000"/>
<path d="M1063.0 1090.5L1165.5 1096.8" stroke="#000" stroke-width="2.0" fill="none"/><path d="M1177.5 1097.5L1164.3 1100.5L1164.8 1092.9Z" fill="#000"/>
<path d="M869.0 1058.5L869.0 1065.0" stroke="#000" stroke-width="2.0" fill="none"/><path d="M869.0 1075.0L865.0 1064.0L873.0 1064.0Z" fill="#000"/>
<path d="M873.0 1080.5L1053.5 1080.3" stroke="#000" stroke-width="2.0" fill="none"/><path d="M1063.5 1080.3L1052.5 1084.3L1052.5 1076.3Z" fill="#000"/>
<path d="M1073.0 1080.8L1165.6 1093.1" stroke="#000" stroke-width="2.0" fill="none"/><path d="M1177.5 1094.6L1164.1 1096.7L1165.1 1089.2Z" fill="#000"/>
<path d="M969.3 1057.0L969.3 1055.0" stroke="#000" stroke-width="2.0" fill="none"/><path d="M969.3 1065.0L965.3 1054.0L973.3 1054.0Z" fill="#000"/>
<path d="M973.3 1070.5L1063.5 1070.3" stroke="#000" stroke-width="2.0" fill="none"/><path d="M1073.5 1070.3L1062.5 1074.3L1062.5 1066.3Z" fill="#000"/>
<path d="M1082.9 1071.1L1165.8 1088.8" stroke="#000" stroke-width="2.0" fill="none"/><path d="M1177.5 1091.3L1164.0 1092.3L1165.6 1084.9Z" fill="#000"/>
<path d="M1217.5 1109.0L1217.5 1120.5" stroke="#000" stroke-width="2.0" fill="none"/><path d="M1217.5 1129.5L1213.3 1119.5L1221.7 1119.5Z" fill="#000"/>
<path d="M1217.5 1148.0L1217.5 1163.5" stroke="#000" stroke-width="2.0" fill="none"/><path d="M1217.5 1173.5L1213.3 1162.5L1221.7 1162.5Z" fill="#000"/>
<path d="M1217.5 1192.0L1217.5 1202.0" stroke="#000" stroke-width="2.0" fill="none"/><path d="M1217.5 1212.0L1213.3 1201.0L1221.7 1201.0Z" fill="#000"/>
<path d="M1176.6 1100L1180.2 1091H1255.8L1259.6 1100L1255.8 1109.2H1180.2Z" fill="url(#ng)" stroke="#2a2a2a" stroke-width="0.6"/>
<path d="M1178.6 1130H1255.6L1259.4 1139.2L1255.6 1148.4H1178.6Z" fill="url(#ng)" stroke="#2a2a2a" stroke-width="0.6"/>
<rect x="1178.6" y="1173.8" width="79" height="18.4" fill="url(#ng)" stroke="#2a2a2a" stroke-width="0.6"/>
<rect x="1183" y="1189.2" width="2.4" height="2.2" fill="#f01010"/><rect x="1191" y="1189.2" width="2.4" height="2.2" fill="#10e010"/><rect x="1198.6" y="1189.2" width="2.4" height="2.2" fill="#1010f0"/>
<path d="M1213.8 1194.6L1217.6 1198.6L1221.6 1194.6M1217.6 1194V1200" stroke="#58d060" stroke-width="1.1" fill="none"/>
</svg>
<span style="left:1150.5px;top:1072px;font-size:10px;color:#ffb454;">c17</span>
<span style="left:1150px;top:1080.5px;font-size:10px;color:#ffb454;">c15</span>
<span style="left:1150px;top:1087.5px;font-size:10px;color:#ffb454;opacity:.55">c16</span>
<span style="left:1150px;top:1094px;font-size:10px;color:#ffb454;opacity:.5">c14</span>
<span style="left:1150px;top:1100.5px;font-size:10px;color:#ffb454;">c12</span>
<span style="left:1150px;top:1110px;font-size:10px;color:#ffb454;">c13</span>
<span style="left:1187px;top:1066px;font-size:8.5px;color:#ffb454;transform:rotate(-12deg);transform-origin:0 100%">c0</span>
<span style="left:1192px;top:1064.5px;font-size:8.5px;color:#ffb454;transform:rotate(-12deg);transform-origin:0 100%">c1</span>
<span style="left:1198px;top:1062.5px;font-size:8.5px;color:#ffb454;transform:rotate(-12deg);transform-origin:0 100%">c2</span>
<span style="left:1203px;top:1061.5px;font-size:8.5px;color:#ffb454;transform:rotate(-12deg);transform-origin:0 100%">c5</span>
<span style="left:1184px;top:1077px;font-size:8.5px;color:#ffb454;transform:rotate(-12deg);transform-origin:0 100%">c6</span>
<span style="left:1190px;top:1075.5px;font-size:8.5px;color:#ffb454;transform:rotate(-12deg);transform-origin:0 100%">c8</span>
<span style="left:1197px;top:1073.5px;font-size:8.5px;color:#ffb454;transform:rotate(-12deg);transform-origin:0 100%">c9</span>
<span style="left:1203px;top:1072px;font-size:8.5px;color:#ffb454;transform:rotate(-12deg);transform-origin:0 100%">c10</span>
<span style="left:1214.5px;top:1109.5px;font-size:10px;color:#ffb454;">1</span>
<span style="left:1203.5px;top:1190.5px;font-size:10px;color:#ffb454;">5</span>
<span style="left:1117px;top:1093.5px;width:200px;text-align:center;font-size:10.5px;color:#050505;-webkit-text-stroke:0.25px #050505;transform:scaleX(1.04)">JoinViews1</span>
<span style="left:1117.6px;top:1132.5px;width:200px;text-align:center;font-size:10.5px;color:#050505;-webkit-text-stroke:0.25px #050505;transform:scaleX(1.075)">IIS_SetLicense</span>
<span style="left:1117.8px;top:1176.5px;width:200px;text-align:center;font-size:10.5px;color:#050505;-webkit-text-stroke:0.25px #050505;transform:scaleX(1.09)">IIS_SetParameters_0_5_1</span>
<div class="nd" style="left:424px;top:650px;width:78px;height:78px"><svg width="64" height="43" viewBox="0 0 64 43"><rect width="64" height="43" fill="#060604"/><path d="M6.3 5.8Q32 3.5999999999999996 64 5.3999999999999995V43H6.3Z" fill="url(#tg)"/><path d="M6.3 5.8Q32 3.5999999999999996 64 5.3999999999999995V43H6.3Z" fill="url(#tv)"/><path d="M2.9 43L3.3 3L4.699999999999999 3L7.5 43Z" fill="#1c1814"/><ellipse cx="2.6999999999999997" cy="37.5" rx="1" ry="1.6" fill="#8a7a68"/><rect x="12.1" y="1.3999999999999995" width="1.5" height="2.4" fill="#b8b0a0"/><path d="M36.1 32.2H60.9L56.9 43H40.1Z" fill="#0b0907"/><path d="M42.9 32.7L42.1 26.3L43.9 25.1L44.1 22.7L45.5 21.9L46.9 22.5L47.3 25.5L49.5 26.7L52.1 28.5L54.1 29.5L54.5 32.7Z" fill="#221a10"/><path d="M44.5 22.9L46.5 22.7L46.7 25.3L44.5 25.5Z" fill="#9a7428"/><path d="M42.3 26.1L47.5 25.7L49.5 27.1L47.5 28.3L43.1 27.7Z" fill="#a47c2a"/><path d="M48.5 27.7L51.9 28.9L53.9 29.9L54.1 32.3L52.5 32.3L51.5 30.5L48.9 29.5Z" fill="#a88030"/><path d="M45.1 28.1L47.9 28.7L48.9 30.3L47.9 32.3L45.5 32.3Z" fill="#35302e"/><path d="M49.5 30.9L51.1 30.9L51.1 32.7L49.5 32.7Z" fill="#a47c2a"/></svg><span class="nl" style="top:48px">rgb_cam96</span><span class="nl n2" style="top:60px">img_00000000.exr</span></div>
<div class="nd" style="left:524px;top:649px;width:78px;height:78px"><svg width="64" height="43" viewBox="0 0 64 43"><rect width="64" height="43" fill="#060604"/><path d="M4 5.8Q32 3.5999999999999996 64 5.3999999999999995V43H4Z" fill="url(#tg)"/><path d="M4 5.8Q32 3.5999999999999996 64 5.3999999999999995V43H4Z" fill="url(#tv)"/><path d="M0.6000000000000001 43L1 3L2.4 3L5.2 43Z" fill="#1c1814"/><ellipse cx="0.3999999999999999" cy="37.5" rx="1" ry="1.6" fill="#8a7a68"/><rect x="9.8" y="1.3999999999999995" width="1.5" height="2.4" fill="#b8b0a0"/><path d="M27.9 32.2H52.699999999999996L48.699999999999996 43H31.9Z" fill="#0b0907"/><path d="M34.7 32.7L33.9 26.3L35.7 25.1L35.9 22.7L37.3 21.9L38.7 22.5L39.1 25.5L41.3 26.7L43.9 28.5L45.9 29.5L46.3 32.7Z" fill="#221a10"/><path d="M36.3 22.9L38.3 22.7L38.5 25.3L36.3 25.5Z" fill="#9a7428"/><path d="M34.1 26.1L39.3 25.7L41.3 27.1L39.3 28.3L34.9 27.7Z" fill="#a47c2a"/><path d="M40.3 27.7L43.7 28.9L45.7 29.9L45.9 32.3L44.3 32.3L43.3 30.5L40.7 29.5Z" fill="#a88030"/><path d="M36.9 28.1L39.7 28.7L40.7 30.3L39.7 32.3L37.3 32.3Z" fill="#35302e"/><path d="M41.3 30.9L42.9 30.9L42.9 32.7L41.3 32.7Z" fill="#a47c2a"/></svg><span class="nl" style="top:48px">rgb_cam95</span><span class="nl n2" style="top:60px">img_00000000.exr</span></div>
<div class="nd" style="left:624px;top:647px;width:78px;height:78px"><svg width="64" height="43" viewBox="0 0 64 43"><rect width="64" height="43" fill="#060604"/><path d="M1.2 5.8Q32 3.5999999999999996 64 5.3999999999999995V43H1.2Z" fill="url(#tg)"/><path d="M1.2 5.8Q32 3.5999999999999996 64 5.3999999999999995V43H1.2Z" fill="url(#tv)"/><rect x="5.5" y="1.5999999999999996" width="1.3" height="1.8" fill="#a8a090"/><path d="M19.299999999999997 32.2H44.1L40.1 43H23.299999999999997Z" fill="#0b0907"/><path d="M26.1 32.7L25.3 26.3L27.1 25.1L27.3 22.7L28.7 21.9L30.1 22.5L30.5 25.5L32.7 26.7L35.3 28.5L37.3 29.5L37.7 32.7Z" fill="#221a10"/><path d="M27.7 22.9L29.7 22.7L29.9 25.3L27.7 25.5Z" fill="#9a7428"/><path d="M25.5 26.1L30.7 25.7L32.7 27.1L30.7 28.3L26.3 27.7Z" fill="#a47c2a"/><path d="M31.7 27.7L35.1 28.9L37.1 29.9L37.3 32.3L35.7 32.3L34.7 30.5L32.1 29.5Z" fill="#a88030"/><path d="M28.3 28.1L31.1 28.7L32.1 30.3L31.1 32.3L28.7 32.3Z" fill="#35302e"/><path d="M32.7 30.9L34.3 30.9L34.3 32.7L32.7 32.7Z" fill="#a47c2a"/></svg><span class="nl" style="top:48px">rgb_cam94</span><span class="nl n2" style="top:60px">img_00000000.exr</span></div>
<div class="nd" style="left:724px;top:647px;width:78px;height:78px"><svg width="64" height="43" viewBox="0 0 64 43"><rect width="64" height="43" fill="#060604"/><path d="M0 5.8Q32 3.5999999999999996 64 5.3999999999999995V43H0Z" fill="url(#tg)"/><path d="M0 5.8Q32 3.5999999999999996 64 5.3999999999999995V43H0Z" fill="url(#tv)"/><rect x="6.5" y="1.5999999999999996" width="1.3" height="1.8" fill="#a8a090"/><path d="M12.6 32.2H37.4L33.4 43H16.6Z" fill="#0b0907"/><path d="M19.4 32.7L18.6 26.3L20.4 25.1L20.6 22.7L22.0 21.9L23.4 22.5L23.8 25.5L26.0 26.7L28.6 28.5L30.6 29.5L31.0 32.7Z" fill="#221a10"/><path d="M21.0 22.9L23.0 22.7L23.2 25.3L21.0 25.5Z" fill="#9a7428"/><path d="M18.8 26.1L24.0 25.7L26.0 27.1L24.0 28.3L19.6 27.7Z" fill="#a47c2a"/><path d="M25.0 27.7L28.4 28.9L30.4 29.9L30.6 32.3L29.0 32.3L28.0 30.5L25.4 29.5Z" fill="#a88030"/><path d="M21.6 28.1L24.4 28.7L25.4 30.3L24.4 32.3L22.0 32.3Z" fill="#35302e"/><path d="M26.0 30.9L27.6 30.9L27.6 32.7L26.0 32.7Z" fill="#a47c2a"/></svg><span class="nl" style="top:48px">rgb_cam93</span><span class="nl n2" style="top:60px">img_00000000.exr</span></div>
<div class="nd" style="left:824px;top:647px;width:78px;height:78px"><svg width="64" height="43" viewBox="0 0 64 43"><rect width="64" height="43" fill="#060604"/><path d="M0 5.8Q32 3.5999999999999996 64 5.3999999999999995V43H0Z" fill="url(#tg)"/><path d="M0 5.8Q32 3.5999999999999996 64 5.3999999999999995V43H0Z" fill="url(#tv)"/><rect x="7.5" y="1.5999999999999996" width="1.3" height="1.8" fill="#a8a090"/><path d="M5.9 32.2H30.700000000000003L26.700000000000003 43H9.9Z" fill="#0b0907"/><path d="M12.7 32.7L11.9 26.3L13.7 25.1L13.9 22.7L15.3 21.9L16.7 22.5L17.1 25.5L19.3 26.7L21.9 28.5L23.9 29.5L24.3 32.7Z" fill="#221a10"/><path d="M14.3 22.9L16.3 22.7L16.5 25.3L14.3 25.5Z" fill="#9a7428"/><path d="M12.1 26.1L17.3 25.7L19.3 27.1L17.3 28.3L12.9 27.7Z" fill="#a47c2a"/><path d="M18.3 27.7L21.7 28.9L23.7 29.9L23.9 32.3L22.3 32.3L21.3 30.5L18.7 29.5Z" fill="#a88030"/><path d="M14.9 28.1L17.7 28.7L18.7 30.3L17.7 32.3L15.3 32.3Z" fill="#35302e"/><path d="M19.3 30.9L20.9 30.9L20.9 32.7L19.3 32.7Z" fill="#a47c2a"/></svg><span class="nl" style="top:48px">rgb_cam92</span><span class="nl n2" style="top:60px">img_00000000.exr</span></div>
<div class="nd" style="left:924px;top:645px;width:78px;height:78px"><svg width="64" height="43" viewBox="0 0 64 43"><rect width="64" height="43" fill="#060604"/><path d="M0 5.8Q32 3.5999999999999996 64 5.3999999999999995V43H0Z" fill="url(#tg)"/><path d="M0 5.8Q32 3.5999999999999996 64 5.3999999999999995V43H0Z" fill="url(#tv)"/><rect x="8.5" y="1.5999999999999996" width="1.3" height="1.8" fill="#a8a090"/><path d="M-0.7000000000000011 32.2H24.1L20.1 43H3.299999999999999Z" fill="#0b0907"/><path d="M6.1 32.7L5.3 26.3L7.1 25.1L7.3 22.7L8.7 21.9L10.1 22.5L10.5 25.5L12.7 26.7L15.3 28.5L17.3 29.5L17.7 32.7Z" fill="#221a10"/><path d="M7.7 22.9L9.7 22.7L9.9 25.3L7.7 25.5Z" fill="#9a7428"/><path d="M5.5 26.1L10.7 25.7L12.7 27.1L10.7 28.3L6.3 27.7Z" fill="#a47c2a"/><path d="M11.7 27.7L15.1 28.9L17.1 29.9L17.3 32.3L15.7 32.3L14.7 30.5L12.1 29.5Z" fill="#a88030"/><path d="M8.3 28.1L11.1 28.7L12.1 30.3L11.1 32.3L8.7 32.3Z" fill="#35302e"/><path d="M12.7 30.9L14.3 30.9L14.3 32.7L12.7 32.7Z" fill="#a47c2a"/></svg><span class="nl" style="top:48px">rgb_cam91</span><span class="nl n2" style="top:60px">img_00000000.exr</span></div>
<div class="nd" style="left:421px;top:840px;width:78px;height:78px"><svg width="64" height="43" viewBox="0 0 64 43"><rect width="64" height="43" fill="#060604"/><path d="M5.8 3.4000000000000004Q32 1.2000000000000002 64 3.0V43H5.8Z" fill="url(#tg)"/><path d="M5.8 3.4000000000000004Q32 1.2000000000000002 64 3.0V43H5.8Z" fill="url(#tv)"/><path d="M2.4 43L2.8 3L4.199999999999999 3L7.0 43Z" fill="#1c1814"/><ellipse cx="2.1999999999999997" cy="37.5" rx="1" ry="1.6" fill="#8a7a68"/><rect x="11.6" y="0" width="1.5" height="2.4" fill="#b8b0a0"/><path d="M35.9 24H60.699999999999996L55.3 34.4H54.5V39H52.099999999999994V43H41.099999999999994V39H38.699999999999996V35.8H41.3V34.4Z" fill="#0a0806"/><rect x="31.099999999999998" y="37.9" width="2.6" height="1.5" fill="#c8bcc4"/><rect x="33.699999999999996" y="37.7" width="4.6" height="1.9" fill="#c01818"/><rect x="37.9" y="37.2" width="3.5" height="3" fill="#0a0806"/><rect x="46.8" y="34.6" width="1.2" height="1.2" fill="#8a8480"/><rect x="50.9" y="35.4" width="1.4" height="1" fill="#6a645e"/><path d="M42.7 24.5L41.9 18.1L43.7 16.9L43.9 14.5L45.3 13.7L46.7 14.3L47.1 17.3L49.3 18.5L51.9 20.3L53.9 21.3L54.3 24.5Z" fill="#221a10"/><path d="M44.3 14.7L46.3 14.5L46.5 17.1L44.3 17.3Z" fill="#9a7428"/><path d="M42.1 17.9L47.3 17.5L49.3 18.9L47.3 20.1L42.9 19.5Z" fill="#a47c2a"/><path d="M48.3 19.5L51.7 20.7L53.7 21.7L53.9 24.1L52.3 24.1L51.3 22.3L48.7 21.3Z" fill="#a88030"/><path d="M44.9 19.9L47.7 20.5L48.7 22.1L47.7 24.1L45.3 24.1Z" fill="#35302e"/><path d="M49.3 22.7L50.9 22.7L50.9 24.5L49.3 24.5Z" fill="#a47c2a"/></svg><span class="nl" style="top:48px">rgb_cam117</span><span class="nl n2" style="top:60px">img_00000000.exr</span></div>
<div class="nd" style="left:515px;top:836px;width:78px;height:78px"><svg width="64" height="43" viewBox="0 0 64 43"><rect width="64" height="43" fill="#060604"/><path d="M3.5 3.4000000000000004Q32 1.2000000000000002 64 3.0V43H3.5Z" fill="url(#tg)"/><path d="M3.5 3.4000000000000004Q32 1.2000000000000002 64 3.0V43H3.5Z" fill="url(#tv)"/><path d="M0.10000000000000009 43L0.5 3L1.9 3L4.7 43Z" fill="#1c1814"/><ellipse cx="-0.10000000000000009" cy="37.5" rx="1" ry="1.6" fill="#8a7a68"/><rect x="9.3" y="0" width="1.5" height="2.4" fill="#b8b0a0"/><path d="M27.6 24H52.4L47 34.4H46.2V39H43.8V43H32.8V39H30.4V35.8H33V34.4Z" fill="#0a0806"/><rect x="22.8" y="37.9" width="2.6" height="1.5" fill="#c8bcc4"/><rect x="25.4" y="37.7" width="4.6" height="1.9" fill="#c01818"/><rect x="29.6" y="37.2" width="3.5" height="3" fill="#0a0806"/><rect x="38.5" y="34.6" width="1.2" height="1.2" fill="#8a8480"/><rect x="42.6" y="35.4" width="1.4" height="1" fill="#6a645e"/><path d="M34.4 24.5L33.6 18.1L35.4 16.9L35.6 14.5L37.0 13.7L38.4 14.3L38.8 17.3L41.0 18.5L43.6 20.3L45.6 21.3L46.0 24.5Z" fill="#221a10"/><path d="M36.0 14.7L38.0 14.5L38.2 17.1L36.0 17.3Z" fill="#9a7428"/><path d="M33.8 17.9L39.0 17.5L41.0 18.9L39.0 20.1L34.6 19.5Z" fill="#a47c2a"/><path d="M40.0 19.5L43.4 20.7L45.4 21.7L45.6 24.1L44.0 24.1L43.0 22.3L40.4 21.3Z" fill="#a88030"/><path d="M36.6 19.9L39.4 20.5L40.4 22.1L39.4 24.1L37.0 24.1Z" fill="#35302e"/><path d="M41.0 22.7L42.6 22.7L42.6 24.5L41.0 24.5Z" fill="#a47c2a"/></svg><span class="nl" style="top:48px">rgb_cam116</span><span class="nl n2" style="top:60px">img_00000000.exr</span></div>
<div class="nd" style="left:615px;top:835px;width:78px;height:78px"><svg width="64" height="43" viewBox="0 0 64 43"><rect width="64" height="43" fill="#060604"/><path d="M1.5 3.4000000000000004Q32 1.2000000000000002 64 3.0V43H1.5Z" fill="url(#tg)"/><path d="M1.5 3.4000000000000004Q32 1.2000000000000002 64 3.0V43H1.5Z" fill="url(#tv)"/><rect x="5.5" y="0" width="1.3" height="1.8" fill="#a8a090"/><path d="M20.300000000000004 24H45.1L39.7 34.4H38.900000000000006V39H36.5V43H25.500000000000004V39H23.1V35.8H25.700000000000003V34.4Z" fill="#0a0806"/><rect x="15.500000000000004" y="37.9" width="2.6" height="1.5" fill="#c8bcc4"/><rect x="18.1" y="37.7" width="4.6" height="1.9" fill="#c01818"/><rect x="22.300000000000004" y="37.2" width="3.5" height="3" fill="#0a0806"/><rect x="31.200000000000003" y="34.6" width="1.2" height="1.2" fill="#8a8480"/><rect x="35.300000000000004" y="35.4" width="1.4" height="1" fill="#6a645e"/><path d="M27.1 24.5L26.3 18.1L28.1 16.9L28.3 14.5L29.7 13.7L31.1 14.3L31.5 17.3L33.7 18.5L36.3 20.3L38.3 21.3L38.7 24.5Z" fill="#221a10"/><path d="M28.7 14.7L30.7 14.5L30.9 17.1L28.7 17.3Z" fill="#9a7428"/><path d="M26.5 17.9L31.7 17.5L33.7 18.9L31.7 20.1L27.3 19.5Z" fill="#a47c2a"/><path d="M32.7 19.5L36.1 20.7L38.1 21.7L38.3 24.1L36.7 24.1L35.7 22.3L33.1 21.3Z" fill="#a88030"/><path d="M29.3 19.9L32.1 20.5L33.1 22.1L32.1 24.1L29.7 24.1Z" fill="#35302e"/><path d="M33.7 22.7L35.3 22.7L35.3 24.5L33.7 24.5Z" fill="#a47c2a"/></svg><span class="nl" style="top:48px">rgb_cam115</span><span class="nl n2" style="top:60px">img_00000000.exr</span></div>
<div class="nd" style="left:733.5px;top:832px;width:78px;height:78px"><svg width="64" height="43" viewBox="0 0 64 43"><rect width="64" height="43" fill="#060604"/><path d="M0 3.4000000000000004Q32 1.2000000000000002 64 3.0V43H0Z" fill="url(#tg)"/><path d="M0 3.4000000000000004Q32 1.2000000000000002 64 3.0V43H0Z" fill="url(#tv)"/><rect x="6.5" y="0" width="1.3" height="1.8" fill="#a8a090"/><path d="M12.6 24H37.4L32 34.4H31.2V39H28.8V43H17.8V39H15.4V35.8H18V34.4Z" fill="#0a0806"/><rect x="7.800000000000001" y="37.9" width="2.6" height="1.5" fill="#c8bcc4"/><rect x="10.4" y="37.7" width="4.6" height="1.9" fill="#c01818"/><rect x="14.6" y="37.2" width="3.5" height="3" fill="#0a0806"/><rect x="23.5" y="34.6" width="1.2" height="1.2" fill="#8a8480"/><rect x="27.6" y="35.4" width="1.4" height="1" fill="#6a645e"/><path d="M19.4 24.5L18.6 18.1L20.4 16.9L20.6 14.5L22.0 13.7L23.4 14.3L23.8 17.3L26.0 18.5L28.6 20.3L30.6 21.3L31.0 24.5Z" fill="#221a10"/><path d="M21.0 14.7L23.0 14.5L23.2 17.1L21.0 17.3Z" fill="#9a7428"/><path d="M18.8 17.9L24.0 17.5L26.0 18.9L24.0 20.1L19.6 19.5Z" fill="#a47c2a"/><path d="M25.0 19.5L28.4 20.7L30.4 21.7L30.6 24.1L29.0 24.1L28.0 22.3L25.4 21.3Z" fill="#a88030"/><path d="M21.6 19.9L24.4 20.5L25.4 22.1L24.4 24.1L22.0 24.1Z" fill="#35302e"/><path d="M26.0 22.7L27.6 22.7L27.6 24.5L26.0 24.5Z" fill="#a47c2a"/></svg><span class="nl" style="top:48px">rgb_cam114</span><span class="nl n2" style="top:60px">img_00000000.exr</span><div style="left:2px;top:75px;width:7px;height:3px;background:#f01010"></div><div style="left:9px;top:75px;width:8px;height:3px;background:#10e010"></div><div style="left:17px;top:75px;width:7px;height:3px;background:#1010f0"></div></div>
<div class="nd" style="left:824px;top:831px;width:78px;height:78px"><svg width="64" height="43" viewBox="0 0 64 43"><rect width="64" height="43" fill="#060604"/><path d="M0 3.4000000000000004Q32 1.2000000000000002 64 3.0V43H0Z" fill="url(#tg)"/><path d="M0 3.4000000000000004Q32 1.2000000000000002 64 3.0V43H0Z" fill="url(#tv)"/><rect x="7.5" y="0" width="1.3" height="1.8" fill="#a8a090"/><path d="M5.9 24H30.700000000000003L25.3 34.4H24.5V39H22.1V43H11.100000000000001V39H8.700000000000001V35.8H11.3V34.4Z" fill="#0a0806"/><rect x="1.1000000000000014" y="37.9" width="2.6" height="1.5" fill="#c8bcc4"/><rect x="3.700000000000001" y="37.7" width="4.6" height="1.9" fill="#c01818"/><rect x="7.9" y="37.2" width="3.5" height="3" fill="#0a0806"/><rect x="16.8" y="34.6" width="1.2" height="1.2" fill="#8a8480"/><rect x="20.900000000000002" y="35.4" width="1.4" height="1" fill="#6a645e"/><path d="M12.7 24.5L11.9 18.1L13.7 16.9L13.9 14.5L15.3 13.7L16.7 14.3L17.1 17.3L19.3 18.5L21.9 20.3L23.9 21.3L24.3 24.5Z" fill="#221a10"/><path d="M14.3 14.7L16.3 14.5L16.5 17.1L14.3 17.3Z" fill="#9a7428"/><path d="M12.1 17.9L17.3 17.5L19.3 18.9L17.3 20.1L12.9 19.5Z" fill="#a47c2a"/><path d="M18.3 19.5L21.7 20.7L23.7 21.7L23.9 24.1L22.3 24.1L21.3 22.3L18.7 21.3Z" fill="#a88030"/><path d="M14.9 19.9L17.7 20.5L18.7 22.1L17.7 24.1L15.3 24.1Z" fill="#35302e"/><path d="M19.3 22.7L20.9 22.7L20.9 24.5L19.3 24.5Z" fill="#a47c2a"/></svg><span class="nl" style="top:48px">rgb_cam113</span><span class="nl n2" style="top:60px">img_00000000.exr</span></div>
<div class="nd" style="left:924px;top:829px;width:78px;height:78px"><svg width="64" height="43" viewBox="0 0 64 43"><rect width="64" height="43" fill="#060604"/><path d="M0 3.4000000000000004Q32 1.2000000000000002 64 3.0V43H0Z" fill="url(#tg)"/><path d="M0 3.4000000000000004Q32 1.2000000000000002 64 3.0V43H0Z" fill="url(#tv)"/><rect x="8.5" y="0" width="1.3" height="1.8" fill="#a8a090"/><path d="M-0.7000000000000011 24H24.1L18.7 34.4H17.9V39H15.5V43H4.499999999999999V39H2.0999999999999996V35.8H4.699999999999999V34.4Z" fill="#0a0806"/><rect x="-5.5" y="37.9" width="2.6" height="1.5" fill="#c8bcc4"/><rect x="-2.9000000000000004" y="37.7" width="4.6" height="1.9" fill="#c01818"/><rect x="1.299999999999999" y="37.2" width="3.5" height="3" fill="#0a0806"/><rect x="10.2" y="34.6" width="1.2" height="1.2" fill="#8a8480"/><rect x="14.299999999999999" y="35.4" width="1.4" height="1" fill="#6a645e"/><path d="M6.1 24.5L5.3 18.1L7.1 16.9L7.3 14.5L8.7 13.7L10.1 14.3L10.5 17.3L12.7 18.5L15.3 20.3L17.3 21.3L17.7 24.5Z" fill="#221a10"/><path d="M7.7 14.7L9.7 14.5L9.9 17.1L7.7 17.3Z" fill="#9a7428"/><path d="M5.5 17.9L10.7 17.5L12.7 18.9L10.7 20.1L6.3 19.5Z" fill="#a47c2a"/><path d="M11.7 19.5L15.1 20.7L17.1 21.7L17.3 24.1L15.7 24.1L14.7 22.3L12.1 21.3Z" fill="#a88030"/><path d="M8.3 19.9L11.1 20.5L12.1 22.1L11.1 24.1L8.7 24.1Z" fill="#35302e"/><path d="M12.7 22.7L14.3 22.7L14.3 24.5L12.7 24.5Z" fill="#a47c2a"/></svg><span class="nl" style="top:48px">rgb_cam112</span><span class="nl n2" style="top:60px">img_00000000.exr</span></div>
<div class="nd" style="left:429.5px;top:983px;width:78px;height:78px"><svg width="64" height="43" viewBox="0 0 64 43"><rect width="64" height="43" fill="#060604"/><path d="M5.8 1.4Q32 -0.8 64 1.0V43H5.8Z" fill="url(#tg)"/><path d="M5.8 1.4Q32 -0.8 64 1.0V43H5.8Z" fill="url(#tv)"/><path d="M2.4 43L2.8 3L4.199999999999999 3L7.0 43Z" fill="#1c1814"/><ellipse cx="2.1999999999999997" cy="37.5" rx="1" ry="1.6" fill="#8a7a68"/><rect x="11.6" y="0" width="1.5" height="2.4" fill="#b8b0a0"/><path d="M36.6 14H61.4L51.8 25.6L55.6 27V29.6H51.6L54.8 43H36.6L42.6 32H38.8V29.4H42L43.4 25.6Z" fill="#0a0806"/><rect x="31.8" y="29.8" width="0.8" height="1.8" fill="#1a1614"/><rect x="34.8" y="30" width="4" height="1.7" fill="#b01420"/><path d="M38.6 26H41.4L40.2 27.8H39.8Z" fill="#1a1410"/><rect x="49.4" y="25" width="1.2" height="1.2" fill="#9a948e"/><path d="M43.4 14.5L42.6 8.1L44.4 6.9L44.6 4.5L46.0 3.7L47.4 4.3L47.8 7.3L50.0 8.5L52.6 10.3L54.6 11.3L55.0 14.5Z" fill="#221a10"/><path d="M45.0 4.7L47.0 4.5L47.2 7.1L45.0 7.3Z" fill="#9a7428"/><path d="M42.8 7.9L48.0 7.5L50.0 8.9L48.0 10.1L43.6 9.5Z" fill="#a47c2a"/><path d="M49.0 9.5L52.4 10.7L54.4 11.7L54.6 14.1L53.0 14.1L52.0 12.3L49.4 11.3Z" fill="#a88030"/><path d="M45.6 9.9L48.4 10.5L49.4 12.1L48.4 14.1L46.0 14.1Z" fill="#35302e"/><path d="M50.0 12.7L51.6 12.7L51.6 14.5L50.0 14.5Z" fill="#a47c2a"/></svg><span class="nl" style="top:48px">rgb_cam138</span><span class="nl n2" style="top:60px">img_00000000.exr</span></div>
<div class="nd" style="left:529.5px;top:984px;width:78px;height:78px"><svg width="64" height="43" viewBox="0 0 64 43"><rect width="64" height="43" fill="#060604"/><path d="M3.5 1.4Q32 -0.8 64 1.0V43H3.5Z" fill="url(#tg)"/><path d="M3.5 1.4Q32 -0.8 64 1.0V43H3.5Z" fill="url(#tv)"/><path d="M0.10000000000000009 43L0.5 3L1.9 3L4.7 43Z" fill="#1c1814"/><ellipse cx="-0.10000000000000009" cy="37.5" rx="1" ry="1.6" fill="#8a7a68"/><rect x="9.3" y="0" width="1.5" height="2.4" fill="#b8b0a0"/><path d="M27.6 14H52.4L42.8 25.6L46.6 27V29.6H42.6L45.8 43H27.6L33.6 32H29.8V29.4H33L34.4 25.6Z" fill="#0a0806"/><rect x="22.8" y="29.8" width="0.8" height="1.8" fill="#1a1614"/><rect x="25.8" y="30" width="4" height="1.7" fill="#b01420"/><path d="M29.6 26H32.4L31.2 27.8H30.8Z" fill="#1a1410"/><rect x="40.4" y="25" width="1.2" height="1.2" fill="#9a948e"/><path d="M34.4 14.5L33.6 8.1L35.4 6.9L35.6 4.5L37.0 3.7L38.4 4.3L38.8 7.3L41.0 8.5L43.6 10.3L45.6 11.3L46.0 14.5Z" fill="#221a10"/><path d="M36.0 4.7L38.0 4.5L38.2 7.1L36.0 7.3Z" fill="#9a7428"/><path d="M33.8 7.9L39.0 7.5L41.0 8.9L39.0 10.1L34.6 9.5Z" fill="#a47c2a"/><path d="M40.0 9.5L43.4 10.7L45.4 11.7L45.6 14.1L44.0 14.1L43.0 12.3L40.4 11.3Z" fill="#a88030"/><path d="M36.6 9.9L39.4 10.5L40.4 12.1L39.4 14.1L37.0 14.1Z" fill="#35302e"/><path d="M41.0 12.7L42.6 12.7L42.6 14.5L41.0 14.5Z" fill="#a47c2a"/></svg><span class="nl" style="top:48px">rgb_cam137</span><span class="nl n2" style="top:60px">img_00000000.exr</span></div>
<div class="nd" style="left:629.5px;top:984px;width:78px;height:78px"><svg width="64" height="43" viewBox="0 0 64 43"><rect width="64" height="43" fill="#060604"/><path d="M1.5 1.4Q32 -0.8 64 1.0V43H1.5Z" fill="url(#tg)"/><path d="M1.5 1.4Q32 -0.8 64 1.0V43H1.5Z" fill="url(#tv)"/><rect x="5.5" y="0" width="1.3" height="1.8" fill="#a8a090"/><path d="M20.300000000000004 14H45.1L35.5 25.6L39.300000000000004 27V29.6H35.300000000000004L38.5 43H20.300000000000004L26.300000000000004 32H22.500000000000004V29.4H25.700000000000003L27.1 25.6Z" fill="#0a0806"/><rect x="15.500000000000004" y="29.8" width="0.8" height="1.8" fill="#1a1614"/><rect x="18.500000000000004" y="30" width="4" height="1.7" fill="#b01420"/><path d="M22.300000000000004 26H25.1L23.900000000000002 27.8H23.500000000000004Z" fill="#1a1410"/><rect x="33.1" y="25" width="1.2" height="1.2" fill="#9a948e"/><path d="M27.1 14.5L26.3 8.1L28.1 6.9L28.3 4.5L29.7 3.7L31.1 4.3L31.5 7.3L33.7 8.5L36.3 10.3L38.3 11.3L38.7 14.5Z" fill="#221a10"/><path d="M28.7 4.7L30.7 4.5L30.9 7.1L28.7 7.3Z" fill="#9a7428"/><path d="M26.5 7.9L31.7 7.5L33.7 8.9L31.7 10.1L27.3 9.5Z" fill="#a47c2a"/><path d="M32.7 9.5L36.1 10.7L38.1 11.7L38.3 14.1L36.7 14.1L35.7 12.3L33.1 11.3Z" fill="#a88030"/><path d="M29.3 9.9L32.1 10.5L33.1 12.1L32.1 14.1L29.7 14.1Z" fill="#35302e"/><path d="M33.7 12.7L35.3 12.7L35.3 14.5L33.7 14.5Z" fill="#a47c2a"/></svg><span class="nl" style="top:48px">rgb_cam136</span><span class="nl n2" style="top:60px">img_00000000.exr</span></div>
<div class="nd" style="left:729.5px;top:981.5px;width:78px;height:78px"><svg width="64" height="43" viewBox="0 0 64 43"><rect width="64" height="43" fill="#060604"/><path d="M0 1.4Q32 -0.8 64 1.0V43H0Z" fill="url(#tg)"/><path d="M0 1.4Q32 -0.8 64 1.0V43H0Z" fill="url(#tv)"/><rect x="6.5" y="0" width="1.3" height="1.8" fill="#a8a090"/><path d="M11.9 14H36.7L27.1 25.6L30.9 27V29.6H26.900000000000002L30.1 43H11.9L17.9 32H14.100000000000001V29.4H17.3L18.700000000000003 25.6Z" fill="#0a0806"/><rect x="7.100000000000001" y="29.8" width="0.8" height="1.8" fill="#1a1614"/><rect x="10.100000000000001" y="30" width="4" height="1.7" fill="#b01420"/><path d="M13.9 26H16.700000000000003L15.5 27.8H15.100000000000001Z" fill="#1a1410"/><rect x="24.7" y="25" width="1.2" height="1.2" fill="#9a948e"/><path d="M18.7 14.5L17.9 8.1L19.7 6.9L19.9 4.5L21.3 3.7L22.7 4.3L23.1 7.3L25.3 8.5L27.9 10.3L29.9 11.3L30.3 14.5Z" fill="#221a10"/><path d="M20.3 4.7L22.3 4.5L22.5 7.1L20.3 7.3Z" fill="#9a7428"/><path d="M18.1 7.9L23.3 7.5L25.3 8.9L23.3 10.1L18.9 9.5Z" fill="#a47c2a"/><path d="M24.3 9.5L27.7 10.7L29.7 11.7L29.9 14.1L28.3 14.1L27.3 12.3L24.7 11.3Z" fill="#a88030"/><path d="M20.9 9.9L23.7 10.5L24.7 12.1L23.7 14.1L21.3 14.1Z" fill="#35302e"/><path d="M25.3 12.7L26.9 12.7L26.9 14.5L25.3 14.5Z" fill="#a47c2a"/></svg><span class="nl" style="top:48px">rgb_cam135</span><span class="nl n2" style="top:60px">img_00000000.exr</span></div>
<div class="nd" style="left:830px;top:980.5px;width:78px;height:78px"><svg width="64" height="43" viewBox="0 0 64 43"><rect width="64" height="43" fill="#060604"/><path d="M0 1.4Q32 -0.8 64 1.0V43H0Z" fill="url(#tg)"/><path d="M0 1.4Q32 -0.8 64 1.0V43H0Z" fill="url(#tv)"/><rect x="7.5" y="0" width="1.3" height="1.8" fill="#a8a090"/><path d="M3.5999999999999996 14H28.4L18.8 25.6L22.6 27V29.6H18.6L21.8 43H3.5999999999999996L9.6 32H5.800000000000001V29.4H9L10.4 25.6Z" fill="#0a0806"/><rect x="-1.1999999999999993" y="29.8" width="0.8" height="1.8" fill="#1a1614"/><rect x="1.8000000000000007" y="30" width="4" height="1.7" fill="#b01420"/><path d="M5.6 26H8.4L7.199999999999999 27.8H6.800000000000001Z" fill="#1a1410"/><rect x="16.4" y="25" width="1.2" height="1.2" fill="#9a948e"/><path d="M10.4 14.5L9.6 8.1L11.4 6.9L11.6 4.5L13.0 3.7L14.4 4.3L14.8 7.3L17.0 8.5L19.6 10.3L21.6 11.3L22.0 14.5Z" fill="#221a10"/><path d="M12.0 4.7L14.0 4.5L14.2 7.1L12.0 7.3Z" fill="#9a7428"/><path d="M9.8 7.9L15.0 7.5L17.0 8.9L15.0 10.1L10.6 9.5Z" fill="#a47c2a"/><path d="M16.0 9.5L19.4 10.7L21.4 11.7L21.6 14.1L20.0 14.1L19.0 12.3L16.4 11.3Z" fill="#a88030"/><path d="M12.6 9.9L15.4 10.5L16.4 12.1L15.4 14.1L13.0 14.1Z" fill="#35302e"/><path d="M17.0 12.7L18.6 12.7L18.6 14.5L17.0 14.5Z" fill="#a47c2a"/></svg><span class="nl" style="top:48px">rgb_cam134</span><span class="nl n2" style="top:60px">img_00000000.exr</span></div>
<div class="nd" style="left:930px;top:979px;width:78px;height:78px"><svg width="64" height="43" viewBox="0 0 64 43"><rect width="64" height="43" fill="#060604"/><path d="M0 1.4Q32 -0.8 64 1.0V43H0Z" fill="url(#tg)"/><path d="M0 1.4Q32 -0.8 64 1.0V43H0Z" fill="url(#tv)"/><rect x="8.5" y="0" width="1.3" height="1.8" fill="#a8a090"/><path d="M-3.0999999999999996 14H21.700000000000003L12.100000000000001 25.6L15.9 27V29.6H11.9L15.100000000000001 43H-3.0999999999999996L2.9000000000000004 32H-0.8999999999999986V29.4H2.3000000000000007L3.700000000000001 25.6Z" fill="#0a0806"/><rect x="-7.899999999999999" y="29.8" width="0.8" height="1.8" fill="#1a1614"/><rect x="-4.899999999999999" y="30" width="4" height="1.7" fill="#b01420"/><path d="M-1.0999999999999996 26H1.700000000000001L0.5 27.8H0.10000000000000142Z" fill="#1a1410"/><rect x="9.700000000000001" y="25" width="1.2" height="1.2" fill="#9a948e"/><path d="M3.7 14.5L2.9 8.1L4.7 6.9L4.9 4.5L6.3 3.7L7.7 4.3L8.1 7.3L10.3 8.5L12.9 10.3L14.9 11.3L15.3 14.5Z" fill="#221a10"/><path d="M5.3 4.7L7.3 4.5L7.5 7.1L5.3 7.3Z" fill="#9a7428"/><path d="M3.1 7.9L8.3 7.5L10.3 8.9L8.3 10.1L3.9 9.5Z" fill="#a47c2a"/><path d="M9.3 9.5L12.7 10.7L14.7 11.7L14.9 14.1L13.3 14.1L12.3 12.3L9.7 11.3Z" fill="#a88030"/><path d="M5.9 9.9L8.7 10.5L9.7 12.1L8.7 14.1L6.3 14.1Z" fill="#35302e"/><path d="M10.3 12.7L11.9 12.7L11.9 14.5L10.3 14.5Z" fill="#a47c2a"/></svg><span class="nl" style="top:48px">rgb_cam133</span><span class="nl n2" style="top:60px">img_00000000.exr</span></div>
<div class="dot" style="left:457.8px;top:815.0px"></div>
<div class="dot" style="left:1023.5px;top:814.9px"></div>
<div class="dot" style="left:557.3px;top:805.0px"></div>
<div class="dot" style="left:1033.5px;top:804.9px"></div>
<div class="dot" style="left:657.5px;top:795.0px"></div>
<div class="dot" style="left:1043.5px;top:794.9px"></div>
<div class="dot" style="left:757.7px;top:785.1px"></div>
<div class="dot" style="left:1053.5px;top:785.0px"></div>
<div class="dot" style="left:857.8px;top:775.1px"></div>
<div class="dot" style="left:1064.5px;top:775.0px"></div>
<div class="dot" style="left:957.8px;top:765.1px"></div>
<div class="dot" style="left:1076.0px;top:764.9px"></div>
<div class="dot" style="left:454.5px;top:965.0px"></div>
<div class="dot" style="left:1023.5px;top:964.8px"></div>
<div class="dot" style="left:548.5px;top:955.0px"></div>
<div class="dot" style="left:1033.5px;top:954.8px"></div>
<div class="dot" style="left:648.5px;top:945.0px"></div>
<div class="dot" style="left:1043.5px;top:944.8px"></div>
<div class="dot" style="left:766.8px;top:935.0px"></div>
<div class="dot" style="left:1053.5px;top:934.9px"></div>
<div class="dot" style="left:857.8px;top:925.0px"></div>
<div class="dot" style="left:1063.5px;top:924.9px"></div>
<div class="dot" style="left:957.8px;top:915.0px"></div>
<div class="dot" style="left:1073.5px;top:914.8px"></div>
<div class="dot" style="left:463.5px;top:1115.0px"></div>
<div class="dot" style="left:1023.5px;top:1114.8px"></div>
<div class="dot" style="left:563.5px;top:1105.0px"></div>
<div class="dot" style="left:1033.5px;top:1104.8px"></div>
<div class="dot" style="left:663.5px;top:1095.0px"></div>
<div class="dot" style="left:1043.5px;top:1094.8px"></div>
<div class="dot" style="left:763.5px;top:1085.0px"></div>
<div class="dot" style="left:1053.5px;top:1084.8px"></div>
<div class="dot" style="left:863.5px;top:1075.0px"></div>
<div class="dot" style="left:1063.5px;top:1074.8px"></div>
<div class="dot" style="left:963.8px;top:1065.0px"></div>
<div class="dot" style="left:1073.5px;top:1064.8px"></div>
<div style="left:1920px;top:0px;width:2px;height:1200px;background:#000;"></div>
<div style="left:1921px;top:26px;width:1px;height:1174px;background:#f0f0f0;"></div>
<div style="left:1915px;top:1196px;width:5px;height:4px;background:#e8e8e8;"></div>
</div></body></html>
